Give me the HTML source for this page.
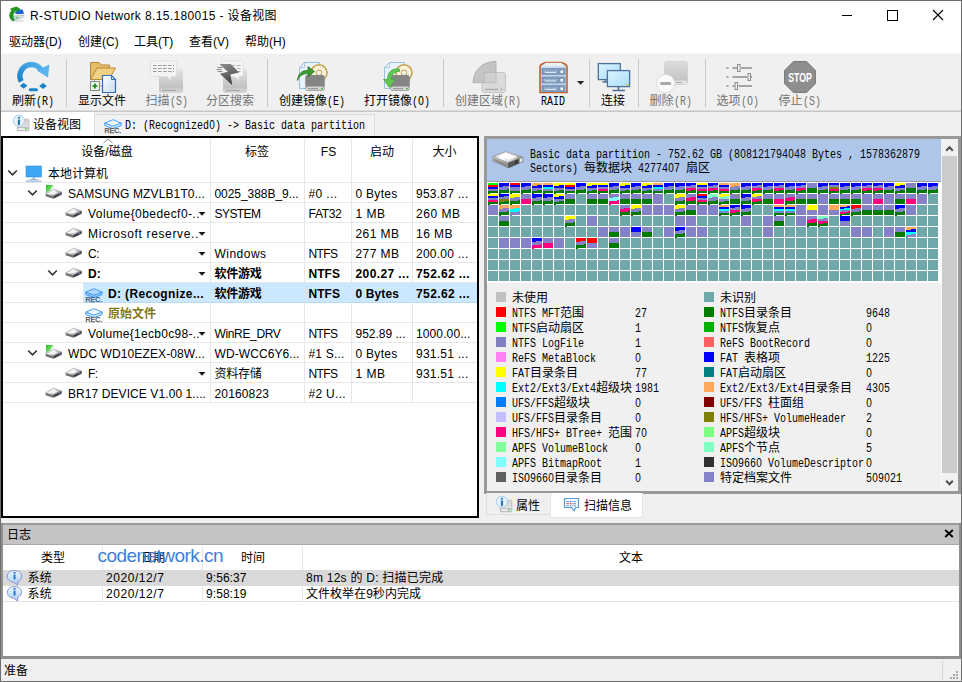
<!DOCTYPE html>
<html lang="zh-CN"><head><meta charset="utf-8"><title>R-STUDIO Network</title>
<style>
*{box-sizing:border-box;margin:0;padding:0}
html,body{width:962px;height:682px;overflow:hidden;background:#f0f0f0}
body{position:relative;font-family:"Liberation Sans","Noto Sans CJK SC",sans-serif;font-size:12px;color:#000}
.a{position:absolute}
.ss{font-family:"Liberation Mono","Noto Sans CJK SC",monospace;font-size:12px;white-space:nowrap}
.ss .l,.ss .c{display:inline-block;vertical-align:top;line-height:inherit;white-space:pre;position:relative}
.ss .l{font-family:"Liberation Mono",monospace;top:2px;transform:scaleX(0.83333);transform-origin:0 50%}
.ss .c{font-family:"Liberation Sans","Noto Sans CJK SC",sans-serif;top:1px}
.ss .z{font-family:"Liberation Sans",sans-serif;display:inline-block;width:7.2px;text-align:center;line-height:0}
.t{position:absolute;white-space:nowrap;line-height:16px;height:16px}
</style></head>
<body>
<div class="a" style="left:0px;top:0px;width:962px;height:682px;background:#fff;border:1px solid #6e6e6e"></div>
<div class="t " style="left:30px;top:8px;letter-spacing:0.369px;">R-STUDIO Network 8.15.180015 - 设备视图</div>
<svg class="a" style="left:8px;top:6px" width="18" height="17" viewBox="0 0 18 17">
<defs><linearGradient id="ai1" x1="0" y1="0" x2="0" y2="1"><stop offset="0" stop-color="#f4f6fa"/><stop offset="1" stop-color="#b9c3d3"/></linearGradient></defs>
<ellipse cx="9.500" cy="15" rx="7" ry="1.300" fill="#d8d8d8" opacity="0.700"/>
<path d="M6.400 7 L10.300 3.500 H14.500 L16.200 7.800 L9.700 8.600 Z" fill="#1d62d0"/>
<path d="M4.900 8.600 L16.600 7.800 V11 L14.300 12.800 L6.400 14.400 L4.900 12.600 Z" fill="url(#ai1)"/>
<path d="M5.500 10.300 L16.300 9.300" stroke="#8a95aa" stroke-width="0.500"/>
<rect x="8.400" y="11.100" width="1.800" height="1.100" fill="#22b822"/>
<path d="M5.600 14.900 C1.500 14 -0.200 8.500 3.500 4.700 L2.600 2.800 L8.200 0.800 L12 2.800 L9.400 5.600 L8 4.800 C5 7 4.300 10.500 6.300 13.600 Z" fill="#1f9a1f" stroke="#147814" stroke-width="0.400"/>
</svg>
<svg class="a" style="left:836px;top:4px" width="120" height="22" viewBox="0 0 120 22"><g fill="none" stroke="#000" stroke-width="1">
<path d="M6 11.500 H16"/><rect x="51.500" y="6.500" width="10" height="10"/><path d="M97 6 L107 16 M107 6 L97 16" stroke-width="1.100"/></g></svg>
<div class="t " style="left:9px;top:34px;">驱动器(D)</div>
<div class="t " style="left:78px;top:34px;">创建(C)</div>
<div class="t " style="left:134px;top:34px;">工具(T)</div>
<div class="t " style="left:189px;top:34px;">查看(V)</div>
<div class="t " style="left:245px;top:34px;">帮助(H)</div>
<div class="a" style="left:1px;top:53px;width:960px;height:628px;background:#f0f0f0;"></div>
<div class="a" style="left:1px;top:53px;width:960px;height:1px;background:#fafafa;"></div>
<div class="a" style="left:1px;top:110px;width:960px;height:1px;background:#dcdcdc;"></div>
<div class="a" style="left:66px;top:59px;width:1px;height:48px;background:#c9c9c9;"></div>
<div class="a" style="left:267px;top:59px;width:1px;height:48px;background:#c9c9c9;"></div>
<div class="a" style="left:443px;top:59px;width:1px;height:48px;background:#c9c9c9;"></div>
<div class="a" style="left:589px;top:59px;width:1px;height:48px;background:#c9c9c9;"></div>
<div class="a" style="left:638px;top:59px;width:1px;height:48px;background:#c9c9c9;"></div>
<div class="a" style="left:705px;top:59px;width:1px;height:48px;background:#c9c9c9;"></div>
<div class="t ss" style="left:33px;top:92px;width:120px;margin-left:-60px;text-align:center;color:#000"><span class="c">刷新</span><span class="l" style="margin-right:-3.600px">(R)</span></div>
<div class="t ss" style="left:102px;top:92px;width:120px;margin-left:-60px;text-align:center;color:#000"><span class="c">显示文件</span></div>
<div class="t ss" style="left:166.5px;top:92px;width:120px;margin-left:-60px;text-align:center;color:#737373"><span class="c">扫描</span><span class="l" style="margin-right:-3.600px">(S)</span></div>
<div class="t ss" style="left:230px;top:92px;width:120px;margin-left:-60px;text-align:center;color:#737373"><span class="c">分区搜索</span></div>
<div class="t ss" style="left:312px;top:92px;width:120px;margin-left:-60px;text-align:center;color:#000"><span class="c">创建镜像</span><span class="l" style="margin-right:-3.600px">(E)</span></div>
<div class="t ss" style="left:397px;top:92px;width:120px;margin-left:-60px;text-align:center;color:#000"><span class="c">打开镜像</span><span class="l" style="margin-right:-3.600px">(O)</span></div>
<div class="t ss" style="left:488px;top:92px;width:120px;margin-left:-60px;text-align:center;color:#737373"><span class="c">创建区域</span><span class="l" style="margin-right:-3.600px">(R)</span></div>
<div class="t ss" style="left:553px;top:92px;width:120px;margin-left:-60px;text-align:center;color:#000"><span class="l" style="margin-right:-4.800px">RAID</span></div>
<div class="t ss" style="left:613px;top:92px;width:120px;margin-left:-60px;text-align:center;color:#000"><span class="c">连接</span></div>
<div class="t ss" style="left:670.5px;top:92px;width:120px;margin-left:-60px;text-align:center;color:#737373"><span class="c">删除</span><span class="l" style="margin-right:-3.600px">(R)</span></div>
<div class="t ss" style="left:737.5px;top:92px;width:120px;margin-left:-60px;text-align:center;color:#737373"><span class="c">选项</span><span class="l" style="margin-right:-3.600px">(O)</span></div>
<div class="t ss" style="left:799.5px;top:92px;width:120px;margin-left:-60px;text-align:center;color:#737373"><span class="c">停止</span><span class="l" style="margin-right:-3.600px">(S)</span></div>
<svg class="a" style="left:14px;top:58px" width="38" height="36" viewBox="0 0 38 36">
<defs><linearGradient id="rf" x1="0" y1="1" x2="1" y2="0"><stop offset="0" stop-color="#1a84cb"/><stop offset="1" stop-color="#55b0ec"/></linearGradient></defs>
<path d="M7.200 23.400 A11.400 11.400 0 1 1 27.500 12.600" fill="none" stroke="url(#rf)" stroke-width="5.300"/>
<path d="M22.800 12.400 L35.400 6.600 L34 19.400 Z" fill="#58b3ee"/>
<path d="M5.800 27.800 L9.600 24.800 L13.400 27.800 L9.600 30.800 Z M25.200 28 L29 25 L32.800 28 L29 31 Z" fill="#1a84cb"/>
<rect x="14.800" y="30.200" width="9.200" height="3" rx="1.500" fill="#1a84cb"/>
</svg>
<svg class="a" style="left:88px;top:60px" width="30" height="34" viewBox="0 0 30 34">
<defs><linearGradient id="doc" x1="0" y1="0" x2="1" y2="1"><stop offset="0" stop-color="#ffffff"/><stop offset="1" stop-color="#c3dcf3"/></linearGradient></defs>
<path d="M2.5 19.5 V2.5 H11 L13.5 5 H21.5 V8" fill="#e6bd6a" stroke="#b98a36" stroke-width="1"/>
<path d="M2.5 19.5 L9 8 H27.5 L21 19.5 Z" fill="#f0cf86" stroke="#b98a36" stroke-width="1"/>
<path d="M14.5 15.5 H23.5 L27.5 19.5 V32.5 H14.5 Z" fill="url(#doc)" stroke="#2f6fb3" stroke-width="1.2"/>
<path d="M23.5 15.5 V19.5 H27.5" fill="none" stroke="#2f6fb3" stroke-width="1"/>
<path d="M6.5 19 V21.5 M11.5 26 H14" stroke="#9a9a9a" stroke-width="1"/>
<rect x="2.5" y="21.5" width="9" height="9" fill="#e8f5e4" stroke="#8a8a8a" stroke-width="1"/>
<path d="M4.5 26 H9.5 M7 23.5 V28.5" stroke="#0b8a0b" stroke-width="1.6"/>
</svg>
<svg class="a" style="left:148px;top:58px" width="38" height="36" viewBox="0 0 38 36"><defs><linearGradient id="g3" x1="0" y1="0" x2="0" y2="1"><stop offset="0" stop-color="#e2e2e2"/><stop offset="1" stop-color="#b9b9b9"/></linearGradient></defs>
<rect x="11" y="11" width="24" height="23.5" rx="2.5" fill="url(#g3)"/>
<rect x="11" y="30.5" width="24" height="3.6" rx="1.6" fill="#cfcfcf"/>
<rect x="14" y="31.9" width="14" height="1" fill="#a3a3a3"/>
<path d="M4.5 3 H26.5 Q28.5 3 28.5 5 V16.5 Q28.5 18.5 26.5 18.5 H23 V22.5 L18.5 18.5 H4.5 Q2.5 18.5 2.5 16.5 V5 Q2.5 3 4.5 3 Z" fill="#f4f4f4" stroke="#dcdcdc" stroke-width="0.8"/>
<path d="M5 7.5 H26 M5 10.5 H26 M5 13.5 H26" stroke="#9c9c9c" stroke-width="1.1" stroke-dasharray="3.6 1.4"/>
</svg>
<svg class="a" style="left:212px;top:58px" width="38" height="36" viewBox="0 0 38 36"><defs><linearGradient id="g4" x1="0" y1="0" x2="0" y2="1"><stop offset="0" stop-color="#e2e2e2"/><stop offset="1" stop-color="#b9b9b9"/></linearGradient></defs>
<rect x="11" y="11" width="24" height="23.5" rx="2.5" fill="url(#g4)"/>
<rect x="11" y="30.5" width="24" height="3.6" rx="1.6" fill="#cfcfcf"/>
<rect x="14" y="31.9" width="14" height="1" fill="#a3a3a3"/>
<path d="M9.5 3 H29.5 Q31.5 3 31.5 5 V16.5 Q31.5 18.5 29.5 18.5 H27 V22.5 L22.5 18.5 H9.5 Z" fill="#f4f4f4" stroke="#dcdcdc" stroke-width="0.8"/>
<path d="M20 7.5 H29 M20 10.5 H29 M20 13.5 H29" stroke="#b4b4b4" stroke-width="1.1" stroke-dasharray="3.6 1.4"/>
<path d="M5.5 9.5 H10.5 M4.5 11.5 H9.5 M5.5 13.5 H10.5" stroke="#8c8c8c" stroke-width="1"/>
<defs><linearGradient id="blt" x1="0" y1="0" x2="0.3" y2="1"><stop offset="0" stop-color="#8e8e8e"/><stop offset="0.5" stop-color="#6a6a6a"/><stop offset="1" stop-color="#3e3e3e"/></linearGradient></defs><path d="M7.5 5.9 L18.7 5.9 L26.9 14.6 L18.4 16.4 L20.3 27.3 L8 15.700 L15.8 13.8 Z" fill="url(#blt)"/>
</svg>
<svg class="a" style="left:294px;top:58px" width="38" height="36" viewBox="0 0 38 36"><path d="M5.5 9.5 L10.5 4.5 H25.5 V30.5 H5.5 Z" fill="#eaf3fc" stroke="#9dbfe3" stroke-width="1"/>
<path d="M5.5 9.5 H10.5 V4.5" fill="none" stroke="#9dbfe3" stroke-width="0.8"/>
<circle cx="25" cy="14.8" r="8" fill="#fbf3dc" stroke="#c4a050" stroke-width="1.6"/>
<circle cx="25" cy="14.8" r="2.8" fill="#f0f0f0" stroke="#c4a050" stroke-width="1"/>
<rect x="11.5" y="17" width="19" height="16" rx="2.5" fill="#7a7a7a"/>
<rect x="11.5" y="17" width="19" height="11.5" rx="2.5" fill="#858585"/>
<rect x="12" y="28.5" width="18" height="4" rx="1.5" fill="#d4d4d4"/>
<rect x="14" y="30.2" width="10" height="1" fill="#8e8e8e"/><rect x="27" y="30" width="2" height="1.4" fill="#3fbf3f"/>
<path d="M3.5 22.500 C4 15 9 12 14 12.5 V8.5 L20.500 13.5 L14 18.500 V15.500 C9 15.500 5.5 17.500 3.5 22.500 Z" fill="#3f9b2f" stroke="#2c7a1f" stroke-width="0.8"/></svg>
<svg class="a" style="left:379px;top:58px" width="38" height="36" viewBox="0 0 38 36"><path d="M5.5 9.5 L10.5 4.5 H25.5 V30.5 H5.5 Z" fill="#eaf3fc" stroke="#9dbfe3" stroke-width="1"/>
<path d="M5.5 9.5 H10.5 V4.5" fill="none" stroke="#9dbfe3" stroke-width="0.8"/>
<circle cx="25" cy="14.8" r="8" fill="#fbf3dc" stroke="#c4a050" stroke-width="1.6"/>
<circle cx="25" cy="14.8" r="2.8" fill="#f0f0f0" stroke="#c4a050" stroke-width="1"/>
<rect x="11.5" y="17" width="19" height="16" rx="2.5" fill="#7a7a7a"/>
<rect x="11.5" y="17" width="19" height="11.5" rx="2.5" fill="#858585"/>
<rect x="12" y="28.5" width="18" height="4" rx="1.5" fill="#d4d4d4"/>
<rect x="14" y="30.2" width="10" height="1" fill="#8e8e8e"/><rect x="27" y="30" width="2" height="1.4" fill="#3fbf3f"/>
<path d="M20.500 11 C13 10 8.500 14 8.500 21.500 H4.500 L10.500 29.500 L16.500 21.500 H12.500 C12.500 16.500 15 13.500 20.500 13.500 Z" fill="#62c552" stroke="#45a838" stroke-width="0.8"/></svg>
<svg class="a" style="left:470px;top:58px" width="38" height="36" viewBox="0 0 38 36">
<rect x="12" y="14.500" width="23.500" height="20" rx="2.5" fill="#dadada" stroke="#c4c4c4" stroke-width="1"/>
<rect x="15" y="30.8" width="13" height="1.2" fill="#a9a9a9"/><rect x="30.500" y="30.600" width="2" height="1.600" fill="#b5b5b5"/>
<path d="M3 24.700 C3.500 11.500 12.500 3.800 26 3.300 V14.500 C18.500 15 14.800 18.500 14.500 24.700 Z" fill="#c4c4c4" stroke="#b2b2b2" stroke-width="1"/>
<path d="M14.500 14.500 H26 V24.700 H14.500 Z" fill="#cfcfcf" stroke="#b6b6b6" stroke-width="0.8"/>
</svg>
<svg class="a" style="left:537px;top:58px" width="34" height="36" viewBox="0 0 34 36">
<path d="M3 34.500 V9 Q3 7 5 6 L8.500 4.500 H24.500 L28 6 Q30 7 30 9 V34.500 Z" fill="#c9d6e6" stroke="#c2622b" stroke-width="1.600"/>
<path d="M8.500 4.800 H24.500 L27.500 8.500 H5.500 Z" fill="#e7eef6"/>
<rect x="4.500" y="10" width="24" height="7" fill="#7d9bbd"/><rect x="4.500" y="18.500" width="24" height="7" fill="#7d9bbd"/><rect x="4.500" y="27" width="24" height="7" fill="#7d9bbd"/>
<path d="M8 14.500 H19 M8 23 H19 M8 31.500 H19" stroke="#dfe8f2" stroke-width="1.200"/>
<path d="M8 12.500 V14.500 M10.700 12.500 V14.500 M13.400 12.500 V14.500 M16.100 12.500 V14.500 M19 12.500 V14.500 M8 21 V23 M10.700 21 V23 M13.400 21 V23 M16.100 21 V23 M19 21 V23 M8 29.500 V31.500 M10.700 29.500 V31.500 M13.400 29.500 V31.500 M16.100 29.500 V31.500 M19 29.500 V31.500" stroke="#dfe8f2" stroke-width="0.800"/>
<rect x="23.500" y="12.500" width="2.500" height="2.500" fill="#fff"/><rect x="23.500" y="21" width="2.500" height="2.500" fill="#fff"/><rect x="23.500" y="29.500" width="2.500" height="2.500" fill="#fff"/>
</svg>
<svg class="a" style="left:576px;top:80px" width="10" height="6" viewBox="0 0 10 6"><path d="M1 1 H8.200 L4.600 4.800 Z" fill="#222"/></svg>
<svg class="a" style="left:596px;top:60px" width="36" height="34" viewBox="0 0 36 34">
<defs><linearGradient id="mon" x1="0" y1="0" x2="1" y2="1"><stop offset="0" stop-color="#dcf5ff"/><stop offset="1" stop-color="#a9dcf9"/></linearGradient></defs>
<rect x="2.300" y="3.600" width="22" height="16" fill="url(#mon)" stroke="#4d7197" stroke-width="1.300"/>
<path d="M6.500 22 H11 M9.500 19.600 V22" stroke="#4d7197" stroke-width="1.500"/>
<rect x="11.400" y="10.600" width="22.200" height="16" fill="url(#mon)" stroke="#4d7197" stroke-width="1.300"/>
<rect x="30" y="24.200" width="2.600" height="1.200" fill="#e6c020"/>
<path d="M22.500 26.800 V30 M16.500 30.500 H29" stroke="#4d7197" stroke-width="1.700"/>
</svg>
<svg class="a" style="left:654px;top:58px" width="38" height="36" viewBox="0 0 38 36">
<defs><linearGradient id="g10" x1="0" y1="0" x2="0" y2="1"><stop offset="0" stop-color="#dedede"/><stop offset="1" stop-color="#bdbdbd"/></linearGradient></defs>
<rect x="10.500" y="3.500" width="23" height="23" rx="2.500" fill="url(#g10)" stroke="#d0d0d0" stroke-width="0.800"/>
<rect x="11" y="22.500" width="22" height="3.600" rx="1.500" fill="#e4e4e4"/><rect x="22" y="24" width="6" height="1" fill="#aaa"/>
<circle cx="11.600" cy="25.600" r="9.100" fill="#fbfbfb" stroke="#dcdcdc" stroke-width="1"/>
<rect x="6" y="24.100" width="11.200" height="3" rx="1.500" fill="#a8a8a8"/>
</svg>
<svg class="a" style="left:724px;top:60px" width="30" height="32" viewBox="0 0 30 32">
<g stroke="#8b8b8b" stroke-width="1.400">
<path d="M2.500 8 H4.500 M8.500 8 H13 M17 8 H28"/><path d="M2.500 17 H4.500 M8.500 17 H23 M27 17 H28"/><path d="M2.500 26 H4.500 M8.500 26 H10.500 M14.500 26 H28"/></g>
<g fill="#f4f4f4" stroke="#8b8b8b" stroke-width="1"><rect x="13.500" y="4.500" width="2.500" height="7"/><rect x="24" y="13.500" width="2.500" height="7"/><rect x="11" y="22.500" width="2.500" height="7"/></g>
</svg>
<svg class="a" style="left:783px;top:60px" width="34" height="34" viewBox="0 0 34 34">
<path d="M10.400 1.500 H23.600 L32.500 10.400 V23.600 L23.600 32.500 H10.400 L1.500 23.600 V10.400 Z" fill="#8e8e8e" stroke="#7c7c7c" stroke-width="1"/>
<text x="17" y="21.600" text-anchor="middle" font-family="Liberation Sans, sans-serif" font-size="12.500" font-weight="bold" fill="#fff" textLength="23.500" lengthAdjust="spacingAndGlyphs">STOP</text>
</svg>
<div class="a" style="left:1px;top:111px;width:960px;height:1px;background:#c6c6c6;"></div>
<div class="a" style="left:1px;top:112px;width:93px;height:25px;background:#fff;"></div>
<div class="a" style="left:94px;top:114px;width:281px;height:23px;background:#f2f2f2;border:1px solid #dcdcdc;border-bottom:none"></div>
<svg class="a" style="left:12px;top:114px" width="20" height="20" viewBox="0 0 20 20">
<defs><linearGradient id="dv12" x1="0" y1="0" x2="0" y2="1"><stop offset="0" stop-color="#d2d2d2"/><stop offset="1" stop-color="#e6e6e6"/></linearGradient></defs>
<rect x="5.300" y="5.200" width="11.600" height="11.600" rx="1" fill="url(#dv12)" stroke="#b4b4b4" stroke-width="0.700"/>
<rect x="5.600" y="13.700" width="11" height="2.900" fill="#ececec" stroke="#a9a9a9" stroke-width="0.600"/><rect x="12.900" y="14.300" width="2.300" height="1" fill="#35c835"/>
<circle cx="6.900" cy="6.800" r="5.600" fill="#e6f2fc" stroke="#a5c8ea" stroke-width="0.900"/>
<rect x="5.850" y="5.500" width="2.200" height="5.400" fill="#2878a8"/><rect x="5.850" y="2.900" width="2.200" height="1.600" fill="#2878a8"/>
</svg>
<div class="t ss" style="left:33px;top:116px;"><span class="c">设备视图</span></div>
<svg class="a" style="left:104px;top:117px" width="20" height="18" viewBox="0 0 20 18">
<path d="M0.800 6.100 V8.600 L8.900 11.600 L17.100 8.600 V6.100 Z" fill="#d6eafc" stroke="#3f9df2" stroke-width="1" stroke-linejoin="round"/>
<path d="M0.800 6.100 L8.900 2.700 L17.100 6.100 L8.900 9.200 Z" fill="#f2f9ff" stroke="#3f9df2" stroke-width="1" stroke-linejoin="round"/>
<text x="0.600" y="15.800" font-family="Liberation Sans, sans-serif" font-size="7.400" fill="#444" stroke="#444" stroke-width="0.250" textLength="16.500" lengthAdjust="spacingAndGlyphs">REC.</text>
</svg>
<div class="t ss" style="left:125px;top:116px;"><span class="l" style="margin-right:-48.000px">D: (Recognized<span class="z">0</span>) -&gt; Basic data partition</span></div>
<div class="a" style="left:1px;top:136px;width:478px;height:382px;background:#fff;border:2px solid #000"></div>
<div class="a" style="left:210px;top:138px;width:1px;height:264px;background:#e6e6e6;"></div>
<div class="a" style="left:304px;top:138px;width:1px;height:264px;background:#e6e6e6;"></div>
<div class="a" style="left:351px;top:138px;width:1px;height:264px;background:#e6e6e6;"></div>
<div class="a" style="left:412px;top:138px;width:1px;height:264px;background:#e6e6e6;"></div>
<div class="a" style="left:3px;top:182px;width:474px;height:1px;background:#e6e6e6;"></div>
<div class="a" style="left:3px;top:202px;width:474px;height:1px;background:#e6e6e6;"></div>
<div class="a" style="left:3px;top:222px;width:474px;height:1px;background:#e6e6e6;"></div>
<div class="a" style="left:3px;top:242px;width:474px;height:1px;background:#e6e6e6;"></div>
<div class="a" style="left:3px;top:262px;width:474px;height:1px;background:#e6e6e6;"></div>
<div class="a" style="left:3px;top:282px;width:474px;height:1px;background:#e6e6e6;"></div>
<div class="a" style="left:3px;top:302px;width:474px;height:1px;background:#e6e6e6;"></div>
<div class="a" style="left:3px;top:322px;width:474px;height:1px;background:#e6e6e6;"></div>
<div class="a" style="left:3px;top:342px;width:474px;height:1px;background:#e6e6e6;"></div>
<div class="a" style="left:3px;top:362px;width:474px;height:1px;background:#e6e6e6;"></div>
<div class="a" style="left:3px;top:382px;width:474px;height:1px;background:#e6e6e6;"></div>
<div class="a" style="left:3px;top:402px;width:474px;height:1px;background:#e6e6e6;"></div>
<svg class="a" style="left:102px;top:138px" width="12" height="6" viewBox="0 0 12 6"><path d="M1.500 5 L6 1 L10.500 5" fill="none" stroke="#8a8a8a" stroke-width="1"/></svg>
<div class="t" style="left:107px;top:144px;width:100px;margin-left:-50px;text-align:center">设备/磁盘</div>
<div class="t" style="left:257px;top:144px;width:100px;margin-left:-50px;text-align:center">标签</div>
<div class="t" style="left:328.5px;top:144px;width:100px;margin-left:-50px;text-align:center">FS</div>
<div class="t" style="left:382px;top:144px;width:100px;margin-left:-50px;text-align:center">启动</div>
<div class="t" style="left:444.5px;top:144px;width:100px;margin-left:-50px;text-align:center">大小</div>
<svg class="a" style="left:7px;top:169.3px" width="11" height="8" viewBox="0 0 11 8"><path d="M1.200 1.500 L5.500 5.800 L9.800 1.500" fill="none" stroke="#333" stroke-width="1.650"/></svg>
<svg class="a" style="left:25px;top:165px" width="18" height="17" viewBox="0 0 18 17"><rect x="1" y="1" width="15.500" height="11" fill="#3ea6f7" stroke="#2f8fe0" stroke-width="0.600"/>
<rect x="7.500" y="12" width="2.500" height="2.500" fill="#9fb8d6"/><rect x="4.500" y="14" width="8.500" height="1" fill="#9fb8d6"/><rect x="1" y="15.600" width="15.500" height="1" fill="#7f9fd0"/></svg>
<div class="t " style="left:48px;top:166px;letter-spacing:0.000px;">本地计算机</div>
<svg class="a" style="left:27px;top:189.3px" width="11" height="8" viewBox="0 0 11 8"><path d="M1.200 1.500 L5.500 5.800 L9.800 1.500" fill="none" stroke="#333" stroke-width="1.650"/></svg>
<svg class="a" style="left:44.8px;top:184.6px" width="18" height="14" viewBox="0 0 18 14"><defs><linearGradient id="gg1" x1="0" y1="0" x2="1" y2="1"><stop offset="0" stop-color="#16c416"/><stop offset="0.6" stop-color="#7fe07f"/><stop offset="1" stop-color="#d8f4d8"/></linearGradient></defs><path d="M1 0 H8.500 L5.500 5 L1 8.500 Z" fill="url(#gg1)"/>
<defs><linearGradient id="dt1" x1="0" y1="0" x2="1" y2="0.600"><stop offset="0" stop-color="#a2a2a2"/><stop offset="0.450" stop-color="#f4f4f4"/><stop offset="1" stop-color="#7c7c7c"/></linearGradient></defs>
<g transform="translate(0.300,4)">
<path d="M0.300 4.900 L8.300 0.200 L16.400 3.100 L8 7.300 Z" fill="url(#dt1)" stroke="#8a8a8a" stroke-width="0.500"/>
<path d="M0.300 4.900 L8 7.300 V9.700 L0.300 7.300 Z" fill="#6f6f6f"/>
<path d="M8 7.300 L16.400 3.100 V5.700 L8 9.700 Z" fill="#3e3e3e"/>
<path d="M4.500 4.300 L8.500 2 L12.500 3.500 L8.300 5.600 Z" fill="#f7f7f7" opacity="0.900"/>
<rect x="13.600" y="4.600" width="1.400" height="1.300" fill="#5a8fe0"/>
</g></svg>
<div class="t " style="left:68px;top:186px;letter-spacing:0.121px;">SAMSUNG MZVLB1T0...</div>
<div class="t " style="left:214.5px;top:186px;letter-spacing:-0.053px;">0025_388B_9...</div>
<div class="t " style="left:308.5px;top:186px;letter-spacing:0.386px;">#0 ...</div>
<div class="t " style="left:355.5px;top:186px;letter-spacing:0.283px;">0 Bytes</div>
<div class="t " style="left:416px;top:186px;letter-spacing:0.246px;">953.87 ...</div>
<svg class="a" style="left:64.8px;top:203.8px" width="18" height="14" viewBox="0 0 18 14">
<defs><linearGradient id="dt2" x1="0" y1="0" x2="1" y2="0.600"><stop offset="0" stop-color="#a2a2a2"/><stop offset="0.450" stop-color="#f4f4f4"/><stop offset="1" stop-color="#7c7c7c"/></linearGradient></defs>
<g transform="translate(0.300,4)">
<path d="M0.300 4.900 L8.300 0.200 L16.400 3.100 L8 7.300 Z" fill="url(#dt2)" stroke="#8a8a8a" stroke-width="0.500"/>
<path d="M0.300 4.900 L8 7.300 V9.700 L0.300 7.300 Z" fill="#6f6f6f"/>
<path d="M8 7.300 L16.400 3.100 V5.700 L8 9.700 Z" fill="#3e3e3e"/>
<path d="M4.500 4.300 L8.500 2 L12.500 3.500 L8.300 5.600 Z" fill="#f7f7f7" opacity="0.900"/>
<rect x="13.600" y="4.600" width="1.400" height="1.300" fill="#5a8fe0"/>
</g></svg>
<div class="t " style="left:88px;top:206px;letter-spacing:0.440px;">Volume{0bedecf0-..</div>
<svg class="a" style="left:198px;top:211px" width="9" height="6" viewBox="0 0 9 6"><path d="M0.500 1 H7.500 L4 4.800 Z" fill="#1a1a1a"/></svg>
<div class="t " style="left:214.5px;top:206px;letter-spacing:-0.558px;">SYSTEM</div>
<div class="t " style="left:308.5px;top:206px;letter-spacing:-0.292px;">FAT32</div>
<div class="t " style="left:355.5px;top:206px;letter-spacing:0.498px;">1 MB</div>
<div class="t " style="left:416px;top:206px;letter-spacing:0.524px;">260 MB</div>
<svg class="a" style="left:64.8px;top:223.8px" width="18" height="14" viewBox="0 0 18 14">
<defs><linearGradient id="dt3" x1="0" y1="0" x2="1" y2="0.600"><stop offset="0" stop-color="#a2a2a2"/><stop offset="0.450" stop-color="#f4f4f4"/><stop offset="1" stop-color="#7c7c7c"/></linearGradient></defs>
<g transform="translate(0.300,4)">
<path d="M0.300 4.900 L8.300 0.200 L16.400 3.100 L8 7.300 Z" fill="url(#dt3)" stroke="#8a8a8a" stroke-width="0.500"/>
<path d="M0.300 4.900 L8 7.300 V9.700 L0.300 7.300 Z" fill="#6f6f6f"/>
<path d="M8 7.300 L16.400 3.100 V5.700 L8 9.700 Z" fill="#3e3e3e"/>
<path d="M4.500 4.300 L8.500 2 L12.500 3.500 L8.300 5.600 Z" fill="#f7f7f7" opacity="0.900"/>
<rect x="13.600" y="4.600" width="1.400" height="1.300" fill="#5a8fe0"/>
</g></svg>
<div class="t " style="left:88px;top:226px;letter-spacing:0.648px;">Microsoft reserve..</div>
<svg class="a" style="left:198px;top:231px" width="9" height="6" viewBox="0 0 9 6"><path d="M0.500 1 H7.500 L4 4.800 Z" fill="#1a1a1a"/></svg>
<div class="t " style="left:355.5px;top:226px;letter-spacing:0.441px;">261 MB</div>
<div class="t " style="left:416px;top:226px;letter-spacing:0.463px;">16 MB</div>
<svg class="a" style="left:64.8px;top:243.8px" width="18" height="14" viewBox="0 0 18 14">
<defs><linearGradient id="dt4" x1="0" y1="0" x2="1" y2="0.600"><stop offset="0" stop-color="#a2a2a2"/><stop offset="0.450" stop-color="#f4f4f4"/><stop offset="1" stop-color="#7c7c7c"/></linearGradient></defs>
<g transform="translate(0.300,4)">
<path d="M0.300 4.900 L8.300 0.200 L16.400 3.100 L8 7.300 Z" fill="url(#dt4)" stroke="#8a8a8a" stroke-width="0.500"/>
<path d="M0.300 4.900 L8 7.300 V9.700 L0.300 7.300 Z" fill="#6f6f6f"/>
<path d="M8 7.300 L16.400 3.100 V5.700 L8 9.700 Z" fill="#3e3e3e"/>
<path d="M4.500 4.300 L8.500 2 L12.500 3.500 L8.300 5.600 Z" fill="#f7f7f7" opacity="0.900"/>
<rect x="13.600" y="4.600" width="1.400" height="1.300" fill="#5a8fe0"/>
</g></svg>
<div class="t " style="left:88px;top:246px;letter-spacing:-0.500px;">C:</div>
<svg class="a" style="left:198px;top:251px" width="9" height="6" viewBox="0 0 9 6"><path d="M0.500 1 H7.500 L4 4.800 Z" fill="#1a1a1a"/></svg>
<div class="t " style="left:214.5px;top:246px;letter-spacing:0.475px;">Windows</div>
<div class="t " style="left:308.5px;top:246px;letter-spacing:-0.582px;">NTFS</div>
<div class="t " style="left:355.5px;top:246px;letter-spacing:0.441px;">277 MB</div>
<div class="t " style="left:416px;top:246px;letter-spacing:0.246px;">200.00 ...</div>
<svg class="a" style="left:47px;top:269.3px" width="11" height="8" viewBox="0 0 11 8"><path d="M1.200 1.500 L5.500 5.800 L9.800 1.500" fill="none" stroke="#333" stroke-width="1.650"/></svg>
<svg class="a" style="left:64.8px;top:263.8px" width="18" height="14" viewBox="0 0 18 14">
<defs><linearGradient id="dt5" x1="0" y1="0" x2="1" y2="0.600"><stop offset="0" stop-color="#a2a2a2"/><stop offset="0.450" stop-color="#f4f4f4"/><stop offset="1" stop-color="#7c7c7c"/></linearGradient></defs>
<g transform="translate(0.300,4)">
<path d="M0.300 4.900 L8.300 0.200 L16.400 3.100 L8 7.300 Z" fill="url(#dt5)" stroke="#8a8a8a" stroke-width="0.500"/>
<path d="M0.300 4.900 L8 7.300 V9.700 L0.300 7.300 Z" fill="#6f6f6f"/>
<path d="M8 7.300 L16.400 3.100 V5.700 L8 9.700 Z" fill="#3e3e3e"/>
<path d="M4.500 4.300 L8.500 2 L12.500 3.500 L8.300 5.600 Z" fill="#f7f7f7" opacity="0.900"/>
<rect x="13.600" y="4.600" width="1.400" height="1.300" fill="#5a8fe0"/>
</g></svg>
<div class="t " style="left:88px;top:266px;letter-spacing:0.169px;font-weight:bold;">D:</div>
<svg class="a" style="left:198px;top:271px" width="9" height="6" viewBox="0 0 9 6"><path d="M0.500 1 H7.500 L4 4.800 Z" fill="#1a1a1a"/></svg>
<div class="t " style="left:214.5px;top:266px;letter-spacing:-0.250px;font-weight:bold;">软件游戏</div>
<div class="t " style="left:308.5px;top:266px;letter-spacing:0.043px;font-weight:bold;">NTFS</div>
<div class="t " style="left:355.5px;top:266px;letter-spacing:0.396px;font-weight:bold;">200.27 ...</div>
<div class="t " style="left:416px;top:266px;letter-spacing:0.396px;font-weight:bold;">752.62 ...</div>
<div class="a" style="left:83px;top:283px;width:394px;height:19px;background:#cce8ff;"></div>
<div class="a" style="left:83px;top:302px;width:394px;height:1px;background:#b8daf6;"></div>
<svg class="a" style="left:85px;top:285.8px" width="20" height="18" viewBox="0 0 20 18">
<path d="M0.800 6.100 V8.600 L8.900 11.600 L17.100 8.600 V6.100 Z" fill="#8cc2f7" stroke="#3f9df2" stroke-width="1" stroke-linejoin="round"/>
<path d="M0.800 6.100 L8.900 2.700 L17.100 6.100 L8.900 9.200 Z" fill="#b4d8fb" stroke="#3f9df2" stroke-width="1" stroke-linejoin="round"/>
<text x="0.600" y="15.800" font-family="Liberation Sans, sans-serif" font-size="7.400" fill="#2d4f70" stroke="#2d4f70" stroke-width="0.250" textLength="16.500" lengthAdjust="spacingAndGlyphs">REC.</text>
</svg>
<div class="t " style="left:108px;top:286px;letter-spacing:0.375px;font-weight:bold;">D: (Recognize...</div>
<div class="t " style="left:214.5px;top:286px;letter-spacing:-0.250px;font-weight:bold;">软件游戏</div>
<div class="t " style="left:308.5px;top:286px;letter-spacing:0.043px;font-weight:bold;">NTFS</div>
<div class="t " style="left:355.5px;top:286px;letter-spacing:0.116px;font-weight:bold;">0 Bytes</div>
<div class="t " style="left:416px;top:286px;letter-spacing:0.396px;font-weight:bold;">752.62 ...</div>
<svg class="a" style="left:85px;top:305.8px" width="20" height="18" viewBox="0 0 20 18">
<path d="M0.800 6.100 V8.600 L8.900 11.600 L17.100 8.600 V6.100 Z" fill="#d6eafc" stroke="#3f9df2" stroke-width="1" stroke-linejoin="round"/>
<path d="M0.800 6.100 L8.900 2.700 L17.100 6.100 L8.900 9.200 Z" fill="#f2f9ff" stroke="#3f9df2" stroke-width="1" stroke-linejoin="round"/>
<text x="0.600" y="15.800" font-family="Liberation Sans, sans-serif" font-size="7.400" fill="#444" stroke="#444" stroke-width="0.250" textLength="16.500" lengthAdjust="spacingAndGlyphs">REC.</text>
</svg>
<div class="t " style="left:108px;top:306px;color:#857a12;letter-spacing:0.000px;font-weight:bold;">原始文件</div>
<svg class="a" style="left:64.8px;top:323.8px" width="18" height="14" viewBox="0 0 18 14">
<defs><linearGradient id="dt6" x1="0" y1="0" x2="1" y2="0.600"><stop offset="0" stop-color="#a2a2a2"/><stop offset="0.450" stop-color="#f4f4f4"/><stop offset="1" stop-color="#7c7c7c"/></linearGradient></defs>
<g transform="translate(0.300,4)">
<path d="M0.300 4.900 L8.300 0.200 L16.400 3.100 L8 7.300 Z" fill="url(#dt6)" stroke="#8a8a8a" stroke-width="0.500"/>
<path d="M0.300 4.900 L8 7.300 V9.700 L0.300 7.300 Z" fill="#6f6f6f"/>
<path d="M8 7.300 L16.400 3.100 V5.700 L8 9.700 Z" fill="#3e3e3e"/>
<path d="M4.500 4.300 L8.500 2 L12.500 3.500 L8.300 5.600 Z" fill="#f7f7f7" opacity="0.900"/>
<rect x="13.600" y="4.600" width="1.400" height="1.300" fill="#5a8fe0"/>
</g></svg>
<div class="t " style="left:88px;top:326px;letter-spacing:0.292px;">Volume{1ecb0c98-..</div>
<svg class="a" style="left:198px;top:331px" width="9" height="6" viewBox="0 0 9 6"><path d="M0.500 1 H7.500 L4 4.800 Z" fill="#1a1a1a"/></svg>
<div class="t " style="left:214.5px;top:326px;letter-spacing:-0.348px;">WinRE_DRV</div>
<div class="t " style="left:308.5px;top:326px;letter-spacing:-0.582px;">NTFS</div>
<div class="t " style="left:355.5px;top:326px;letter-spacing:-0.004px;">952.89 ...</div>
<div class="t " style="left:416px;top:326px;letter-spacing:0.112px;">1000.00...</div>
<svg class="a" style="left:27px;top:349.3px" width="11" height="8" viewBox="0 0 11 8"><path d="M1.200 1.500 L5.500 5.800 L9.800 1.500" fill="none" stroke="#333" stroke-width="1.650"/></svg>
<svg class="a" style="left:44.8px;top:344.6px" width="18" height="14" viewBox="0 0 18 14"><defs><linearGradient id="gg7" x1="0" y1="0" x2="1" y2="1"><stop offset="0" stop-color="#16c416"/><stop offset="0.6" stop-color="#7fe07f"/><stop offset="1" stop-color="#d8f4d8"/></linearGradient></defs><path d="M1 0 H8.500 L5.500 5 L1 8.500 Z" fill="url(#gg7)"/>
<defs><linearGradient id="dt7" x1="0" y1="0" x2="1" y2="0.600"><stop offset="0" stop-color="#a2a2a2"/><stop offset="0.450" stop-color="#f4f4f4"/><stop offset="1" stop-color="#7c7c7c"/></linearGradient></defs>
<g transform="translate(0.300,4)">
<path d="M0.300 4.900 L8.300 0.200 L16.400 3.100 L8 7.300 Z" fill="url(#dt7)" stroke="#8a8a8a" stroke-width="0.500"/>
<path d="M0.300 4.900 L8 7.300 V9.700 L0.300 7.300 Z" fill="#6f6f6f"/>
<path d="M8 7.300 L16.400 3.100 V5.700 L8 9.700 Z" fill="#3e3e3e"/>
<path d="M4.500 4.300 L8.500 2 L12.500 3.500 L8.300 5.600 Z" fill="#f7f7f7" opacity="0.900"/>
<rect x="13.600" y="4.600" width="1.400" height="1.300" fill="#5a8fe0"/>
</g></svg>
<div class="t " style="left:68px;top:346px;letter-spacing:0.122px;">WDC WD10EZEX-08W...</div>
<div class="t " style="left:214.5px;top:346px;letter-spacing:0.083px;">WD-WCC6Y6...</div>
<div class="t " style="left:308.5px;top:346px;letter-spacing:0.187px;">#1 S...</div>
<div class="t " style="left:355.5px;top:346px;letter-spacing:0.283px;">0 Bytes</div>
<div class="t " style="left:416px;top:346px;letter-spacing:0.246px;">931.51 ...</div>
<svg class="a" style="left:64.8px;top:363.8px" width="18" height="14" viewBox="0 0 18 14">
<defs><linearGradient id="dt8" x1="0" y1="0" x2="1" y2="0.600"><stop offset="0" stop-color="#a2a2a2"/><stop offset="0.450" stop-color="#f4f4f4"/><stop offset="1" stop-color="#7c7c7c"/></linearGradient></defs>
<g transform="translate(0.300,4)">
<path d="M0.300 4.900 L8.300 0.200 L16.400 3.100 L8 7.300 Z" fill="url(#dt8)" stroke="#8a8a8a" stroke-width="0.500"/>
<path d="M0.300 4.900 L8 7.300 V9.700 L0.300 7.300 Z" fill="#6f6f6f"/>
<path d="M8 7.300 L16.400 3.100 V5.700 L8 9.700 Z" fill="#3e3e3e"/>
<path d="M4.500 4.300 L8.500 2 L12.500 3.500 L8.300 5.600 Z" fill="#f7f7f7" opacity="0.900"/>
<rect x="13.600" y="4.600" width="1.400" height="1.300" fill="#5a8fe0"/>
</g></svg>
<div class="t " style="left:88px;top:366px;letter-spacing:-0.582px;">F:</div>
<svg class="a" style="left:198px;top:371px" width="9" height="6" viewBox="0 0 9 6"><path d="M0.500 1 H7.500 L4 4.800 Z" fill="#1a1a1a"/></svg>
<div class="t " style="left:214.5px;top:366px;letter-spacing:-0.250px;">资料存储</div>
<div class="t " style="left:308.5px;top:366px;letter-spacing:-0.582px;">NTFS</div>
<div class="t " style="left:355.5px;top:366px;letter-spacing:0.498px;">1 MB</div>
<div class="t " style="left:416px;top:366px;letter-spacing:0.246px;">931.51 ...</div>
<svg class="a" style="left:44.8px;top:383.8px" width="18" height="14" viewBox="0 0 18 14">
<defs><linearGradient id="dt9" x1="0" y1="0" x2="1" y2="0.600"><stop offset="0" stop-color="#a2a2a2"/><stop offset="0.450" stop-color="#f4f4f4"/><stop offset="1" stop-color="#7c7c7c"/></linearGradient></defs>
<g transform="translate(0.300,4)">
<path d="M0.300 4.900 L8.300 0.200 L16.400 3.100 L8 7.300 Z" fill="url(#dt9)" stroke="#8a8a8a" stroke-width="0.500"/>
<path d="M0.300 4.900 L8 7.300 V9.700 L0.300 7.300 Z" fill="#6f6f6f"/>
<path d="M8 7.300 L16.400 3.100 V5.700 L8 9.700 Z" fill="#3e3e3e"/>
<path d="M4.500 4.300 L8.500 2 L12.500 3.500 L8.300 5.600 Z" fill="#f7f7f7" opacity="0.900"/>
<rect x="13.600" y="4.600" width="1.400" height="1.300" fill="#5a8fe0"/>
</g></svg>
<div class="t " style="left:68px;top:386px;letter-spacing:0.084px;">BR17 DEVICE V1.00 1....</div>
<div class="t " style="left:214.5px;top:386px;letter-spacing:0.139px;">20160823</div>
<div class="t " style="left:308.5px;top:386px;letter-spacing:0.307px;">#2 U...</div>
<div class="a" style="left:484px;top:136px;width:477px;height:358px;background:#f0f0f0;border:3px solid #999"></div>
<div class="a" style="left:487px;top:139px;width:454px;height:42px;background:#aec6ea;"></div>
<div class="a" style="left:487px;top:181px;width:454px;height:1px;background:#9c9c9c;"></div>
<div class="a" style="left:487px;top:182px;width:454px;height:101px;background:#fff;"></div>
<svg class="a" style="left:491px;top:148px" width="34" height="22" viewBox="0 0 34 22">
<defs><linearGradient id="hd1" x1="0" y1="0" x2="1" y2="0.300"><stop offset="0" stop-color="#a9a9a9"/><stop offset="0.450" stop-color="#ffffff"/><stop offset="0.800" stop-color="#cfcfcf"/><stop offset="1" stop-color="#8e8e8e"/></linearGradient>
<linearGradient id="hd2" x1="0" y1="0" x2="0" y2="1"><stop offset="0" stop-color="#c9c9c9"/><stop offset="1" stop-color="#8a8a8a"/></linearGradient></defs>
<path d="M1.300 8.400 L14.600 3.800 L32.100 9.200 V13.800 L17.500 20 L1.300 12.900 Z" fill="#5a5a5a"/>
<path d="M1.300 8.400 L17.100 14.600 V20 L1.300 12.900 Z" fill="url(#hd2)"/>
<path d="M17.100 14.600 L32.100 9.200 V13.800 L17.500 20 Z" fill="#555"/>
<path d="M28.500 10.600 L31.600 9.500 V13.600 L28.500 14.900 Z" fill="#e9e9e9"/>
<path d="M24 12.300 L26.800 11.300 V15.300 L24 16.500 Z" fill="#3a3a3a"/>
<path d="M1.300 8.400 L14.600 3.800 L32.100 9.200 L17.100 14.600 Z" fill="url(#hd1)" stroke="#8c8c8c" stroke-width="0.500"/>
<path d="M7 8 L15 5.200 L26.500 8.800 L18 11.800 Z" fill="#ffffff" opacity="0.850"/>
<path d="M2.500 11 L16 16.800 M2.500 12.400 L16 18.300" stroke="#6e6e6e" stroke-width="0.600"/>
</svg>
<div class="t ss" style="left:530px;top:146px;line-height:14px;height:14px"><span class="l" style="margin-right:-78.000px">Basic data partition - 752.62 GB (8<span class="z">0</span>8121794<span class="z">0</span>48 Bytes , 1578362879</span></div>
<div class="t ss" style="left:530px;top:160px;line-height:14px;height:14px"><span class="l" style="margin-right:-10.800px">Sectors) </span><span class="c">每数据块</span><span class="l" style="margin-right:-10.800px"> 42774<span class="z">0</span>7 </span><span class="c">扇区</span></div>
<div class="a" style="left:941px;top:139px;width:17px;height:352px;background:#f1f1f1;"></div>
<div class="a" style="left:941px;top:182px;width:1px;height:309px;background:#fafafa;"></div>
<div class="a" style="left:942px;top:156px;width:15px;height:317px;background:#cbcbcb;"></div>
<svg class="a" style="left:941px;top:139.5px" width="17" height="18" viewBox="0 0 17 18"><path d="M5.200 10.700 L8.500 7.300 L11.800 10.700" fill="none" stroke="#505050" stroke-width="2"/></svg>
<svg class="a" style="left:941px;top:474px" width="17" height="18" viewBox="0 0 17 18"><path d="M5.200 6.800 L8.500 10.200 L11.800 6.800" fill="none" stroke="#505050" stroke-width="2"/></svg>
<svg class="a" style="left:486px;top:182px" width="455" height="101" viewBox="0 0 455 101"><defs><pattern id="tg" x="2" y="1" width="11" height="11" patternUnits="userSpaceOnUse"><rect width="10" height="10" fill="#70a8aa"/></pattern></defs>
<rect x="2" y="1" width="451" height="99" fill="url(#tg)"/><rect x="2" y="1" width="10" height="2" fill="#00ff00"/><rect x="2" y="3" width="10" height="2" fill="#fe0000"/><rect x="2" y="5" width="10" height="2" fill="#0000fe"/><rect x="2" y="7" width="10" height="2" fill="#8583c7"/><rect x="2" y="9" width="10" height="2" fill="#007a00"/><rect x="2" y="11" width="2" height="1" fill="#007a00"/><rect x="13" y="1" width="10" height="3" fill="#0000fe"/><rect x="13" y="4" width="4" height="1" fill="#0000fe"/><rect x="17" y="4" width="6" height="1" fill="#8583c7"/><rect x="13" y="5" width="10" height="2" fill="#8583c7"/><rect x="13" y="7" width="8" height="1" fill="#8583c7"/><rect x="21" y="7" width="2" height="1" fill="#007a00"/><rect x="13" y="8" width="10" height="3" fill="#007a00"/><rect x="13" y="11" width="2" height="1" fill="#007a00"/><rect x="24" y="1" width="10" height="2" fill="#fe0000"/><rect x="24" y="3" width="10" height="2" fill="#0000fe"/><rect x="24" y="5" width="10" height="2" fill="#8583c7"/><rect x="24" y="7" width="10" height="2" fill="#8583c7"/><rect x="24" y="9" width="10" height="2" fill="#007a00"/><rect x="24" y="11" width="2" height="1" fill="#007a00"/><rect x="35" y="1" width="10" height="3" fill="#0000fe"/><rect x="35" y="4" width="4" height="1" fill="#0000fe"/><rect x="39" y="4" width="6" height="1" fill="#8583c7"/><rect x="35" y="5" width="10" height="2" fill="#8583c7"/><rect x="35" y="7" width="8" height="1" fill="#8583c7"/><rect x="43" y="7" width="2" height="1" fill="#007a00"/><rect x="35" y="8" width="10" height="3" fill="#007a00"/><rect x="35" y="11" width="2" height="1" fill="#007a00"/><rect x="46" y="1" width="10" height="2" fill="#ffa95a"/><rect x="46" y="3" width="5" height="1" fill="#ffa95a"/><rect x="51" y="3" width="5" height="1" fill="#0000fe"/><rect x="46" y="4" width="10" height="2" fill="#0000fe"/><rect x="46" y="6" width="10" height="2" fill="#8583c7"/><rect x="46" y="8" width="5" height="1" fill="#8583c7"/><rect x="51" y="8" width="5" height="1" fill="#007a00"/><rect x="46" y="9" width="10" height="2" fill="#007a00"/><rect x="46" y="11" width="2" height="1" fill="#007a00"/><rect x="57" y="1" width="10" height="2" fill="#ffa95a"/><rect x="57" y="3" width="10" height="2" fill="#0000fe"/><rect x="57" y="5" width="10" height="2" fill="#00ffff"/><rect x="57" y="7" width="10" height="2" fill="#8583c7"/><rect x="57" y="9" width="10" height="2" fill="#007a00"/><rect x="57" y="11" width="2" height="1" fill="#007a00"/><rect x="68" y="1" width="10" height="2" fill="#ffff00"/><rect x="68" y="3" width="5" height="1" fill="#ffff00"/><rect x="73" y="3" width="5" height="1" fill="#0000fe"/><rect x="68" y="4" width="10" height="2" fill="#0000fe"/><rect x="68" y="6" width="10" height="2" fill="#8583c7"/><rect x="68" y="8" width="5" height="1" fill="#8583c7"/><rect x="73" y="8" width="5" height="1" fill="#007a00"/><rect x="68" y="9" width="10" height="2" fill="#007a00"/><rect x="68" y="11" width="2" height="1" fill="#007a00"/><rect x="79" y="1" width="10" height="2" fill="#ffff00"/><rect x="79" y="3" width="10" height="2" fill="#fe0000"/><rect x="79" y="5" width="10" height="2" fill="#0000fe"/><rect x="79" y="7" width="10" height="2" fill="#8583c7"/><rect x="79" y="9" width="10" height="2" fill="#007a00"/><rect x="79" y="11" width="2" height="1" fill="#007a00"/><rect x="90" y="1" width="10" height="3" fill="#0000fe"/><rect x="90" y="4" width="4" height="1" fill="#0000fe"/><rect x="94" y="4" width="6" height="1" fill="#8583c7"/><rect x="90" y="5" width="10" height="2" fill="#8583c7"/><rect x="90" y="7" width="8" height="1" fill="#8583c7"/><rect x="98" y="7" width="2" height="1" fill="#007a00"/><rect x="90" y="8" width="10" height="3" fill="#007a00"/><rect x="90" y="11" width="2" height="1" fill="#007a00"/><rect x="101" y="1" width="10" height="2" fill="#ffff00"/><rect x="101" y="3" width="5" height="1" fill="#ffff00"/><rect x="106" y="3" width="5" height="1" fill="#0000fe"/><rect x="101" y="4" width="10" height="2" fill="#0000fe"/><rect x="101" y="6" width="10" height="2" fill="#8583c7"/><rect x="101" y="8" width="5" height="1" fill="#8583c7"/><rect x="106" y="8" width="5" height="1" fill="#007a00"/><rect x="101" y="9" width="10" height="2" fill="#007a00"/><rect x="101" y="11" width="2" height="1" fill="#007a00"/><rect x="112" y="1" width="10" height="2" fill="#ffff00"/><rect x="112" y="3" width="10" height="2" fill="#0000fe"/><rect x="112" y="5" width="10" height="2" fill="#8583c7"/><rect x="112" y="7" width="10" height="2" fill="#ff007f"/><rect x="112" y="9" width="10" height="2" fill="#007a00"/><rect x="112" y="11" width="2" height="1" fill="#007a00"/><rect x="123" y="1" width="10" height="3" fill="#0000fe"/><rect x="123" y="4" width="4" height="1" fill="#0000fe"/><rect x="127" y="4" width="6" height="1" fill="#8583c7"/><rect x="123" y="5" width="10" height="2" fill="#8583c7"/><rect x="123" y="7" width="8" height="1" fill="#8583c7"/><rect x="131" y="7" width="2" height="1" fill="#007a00"/><rect x="123" y="8" width="10" height="3" fill="#007a00"/><rect x="123" y="11" width="2" height="1" fill="#007a00"/><rect x="134" y="1" width="10" height="2" fill="#ffff00"/><rect x="134" y="3" width="5" height="1" fill="#ffff00"/><rect x="139" y="3" width="5" height="1" fill="#0000fe"/><rect x="134" y="4" width="10" height="2" fill="#0000fe"/><rect x="134" y="6" width="10" height="2" fill="#8583c7"/><rect x="134" y="8" width="5" height="1" fill="#8583c7"/><rect x="139" y="8" width="5" height="1" fill="#007a00"/><rect x="134" y="9" width="10" height="2" fill="#007a00"/><rect x="134" y="11" width="2" height="1" fill="#007a00"/><rect x="145" y="1" width="10" height="3" fill="#0000fe"/><rect x="145" y="4" width="4" height="1" fill="#0000fe"/><rect x="149" y="4" width="6" height="1" fill="#8583c7"/><rect x="145" y="5" width="10" height="2" fill="#8583c7"/><rect x="145" y="7" width="8" height="1" fill="#8583c7"/><rect x="153" y="7" width="2" height="1" fill="#007a00"/><rect x="145" y="8" width="10" height="3" fill="#007a00"/><rect x="145" y="11" width="2" height="1" fill="#007a00"/><rect x="156" y="1" width="10" height="2" fill="#ffff00"/><rect x="156" y="3" width="5" height="1" fill="#ffff00"/><rect x="161" y="3" width="5" height="1" fill="#0000fe"/><rect x="156" y="4" width="10" height="2" fill="#0000fe"/><rect x="156" y="6" width="10" height="2" fill="#8583c7"/><rect x="156" y="8" width="5" height="1" fill="#8583c7"/><rect x="161" y="8" width="5" height="1" fill="#007a00"/><rect x="156" y="9" width="10" height="2" fill="#007a00"/><rect x="156" y="11" width="2" height="1" fill="#007a00"/><rect x="167" y="1" width="10" height="2" fill="#ffa95a"/><rect x="167" y="3" width="10" height="2" fill="#0000fe"/><rect x="167" y="5" width="10" height="2" fill="#00ffff"/><rect x="167" y="7" width="10" height="2" fill="#8583c7"/><rect x="167" y="9" width="10" height="2" fill="#007a00"/><rect x="167" y="11" width="2" height="1" fill="#007a00"/><rect x="178" y="1" width="10" height="3" fill="#0000fe"/><rect x="178" y="4" width="4" height="1" fill="#0000fe"/><rect x="182" y="4" width="6" height="1" fill="#8583c7"/><rect x="178" y="5" width="10" height="2" fill="#8583c7"/><rect x="178" y="7" width="8" height="1" fill="#8583c7"/><rect x="186" y="7" width="2" height="1" fill="#007a00"/><rect x="178" y="8" width="10" height="3" fill="#007a00"/><rect x="178" y="11" width="2" height="1" fill="#007a00"/><rect x="189" y="1" width="10" height="3" fill="#0000fe"/><rect x="189" y="4" width="4" height="1" fill="#0000fe"/><rect x="193" y="4" width="6" height="1" fill="#8583c7"/><rect x="189" y="5" width="10" height="2" fill="#8583c7"/><rect x="189" y="7" width="8" height="1" fill="#8583c7"/><rect x="197" y="7" width="2" height="1" fill="#007a00"/><rect x="189" y="8" width="10" height="3" fill="#007a00"/><rect x="189" y="11" width="2" height="1" fill="#007a00"/><rect x="200" y="1" width="10" height="2" fill="#0000fe"/><rect x="200" y="3" width="5" height="1" fill="#0000fe"/><rect x="205" y="3" width="5" height="1" fill="#8583c7"/><rect x="200" y="4" width="10" height="2" fill="#8583c7"/><rect x="200" y="6" width="10" height="2" fill="#ff007f"/><rect x="200" y="8" width="5" height="1" fill="#ff007f"/><rect x="205" y="8" width="5" height="1" fill="#007a00"/><rect x="200" y="9" width="10" height="2" fill="#007a00"/><rect x="200" y="11" width="2" height="1" fill="#007a00"/><rect x="211" y="1" width="10" height="2" fill="#ffff00"/><rect x="211" y="3" width="10" height="2" fill="#0000fe"/><rect x="211" y="5" width="10" height="2" fill="#8583c7"/><rect x="211" y="7" width="10" height="2" fill="#ff007f"/><rect x="211" y="9" width="10" height="2" fill="#007a00"/><rect x="211" y="11" width="2" height="1" fill="#007a00"/><rect x="222" y="1" width="10" height="2" fill="#0000fe"/><rect x="222" y="3" width="5" height="1" fill="#0000fe"/><rect x="227" y="3" width="5" height="1" fill="#8583c7"/><rect x="222" y="4" width="10" height="2" fill="#8583c7"/><rect x="222" y="6" width="10" height="2" fill="#ff007f"/><rect x="222" y="8" width="5" height="1" fill="#ff007f"/><rect x="227" y="8" width="5" height="1" fill="#007a00"/><rect x="222" y="9" width="10" height="2" fill="#007a00"/><rect x="222" y="11" width="2" height="1" fill="#007a00"/><rect x="233" y="1" width="10" height="2" fill="#ffa95a"/><rect x="233" y="3" width="10" height="2" fill="#0000fe"/><rect x="233" y="5" width="10" height="2" fill="#8583c7"/><rect x="233" y="7" width="10" height="2" fill="#ff007f"/><rect x="233" y="9" width="10" height="2" fill="#007a00"/><rect x="233" y="11" width="2" height="1" fill="#007a00"/><rect x="244" y="1" width="10" height="3" fill="#ffa95a"/><rect x="244" y="4" width="4" height="1" fill="#ffa95a"/><rect x="248" y="4" width="6" height="1" fill="#8583c7"/><rect x="244" y="5" width="10" height="2" fill="#8583c7"/><rect x="244" y="7" width="8" height="1" fill="#8583c7"/><rect x="252" y="7" width="2" height="1" fill="#007a00"/><rect x="244" y="8" width="10" height="3" fill="#007a00"/><rect x="244" y="11" width="2" height="1" fill="#007a00"/><rect x="255" y="1" width="10" height="3" fill="#0000fe"/><rect x="255" y="4" width="4" height="1" fill="#0000fe"/><rect x="259" y="4" width="6" height="1" fill="#8583c7"/><rect x="255" y="5" width="10" height="2" fill="#8583c7"/><rect x="255" y="7" width="8" height="1" fill="#8583c7"/><rect x="263" y="7" width="2" height="1" fill="#007a00"/><rect x="255" y="8" width="10" height="3" fill="#007a00"/><rect x="255" y="11" width="2" height="1" fill="#007a00"/><rect x="266" y="1" width="10" height="2" fill="#0000fe"/><rect x="266" y="3" width="5" height="1" fill="#0000fe"/><rect x="271" y="3" width="5" height="1" fill="#8583c7"/><rect x="266" y="4" width="10" height="2" fill="#8583c7"/><rect x="266" y="6" width="10" height="2" fill="#ff007f"/><rect x="266" y="8" width="5" height="1" fill="#ff007f"/><rect x="271" y="8" width="5" height="1" fill="#007a00"/><rect x="266" y="9" width="10" height="2" fill="#007a00"/><rect x="266" y="11" width="2" height="1" fill="#007a00"/><rect x="277" y="1" width="10" height="3" fill="#0000fe"/><rect x="277" y="4" width="4" height="1" fill="#0000fe"/><rect x="281" y="4" width="6" height="1" fill="#8583c7"/><rect x="277" y="5" width="10" height="2" fill="#8583c7"/><rect x="277" y="7" width="8" height="1" fill="#8583c7"/><rect x="285" y="7" width="2" height="1" fill="#007a00"/><rect x="277" y="8" width="10" height="3" fill="#007a00"/><rect x="277" y="11" width="2" height="1" fill="#007a00"/><rect x="288" y="1" width="10" height="2" fill="#0000fe"/><rect x="288" y="3" width="5" height="1" fill="#0000fe"/><rect x="293" y="3" width="5" height="1" fill="#8583c7"/><rect x="288" y="4" width="10" height="2" fill="#8583c7"/><rect x="288" y="6" width="10" height="2" fill="#ff007f"/><rect x="288" y="8" width="5" height="1" fill="#ff007f"/><rect x="293" y="8" width="5" height="1" fill="#007a00"/><rect x="288" y="9" width="10" height="2" fill="#007a00"/><rect x="288" y="11" width="2" height="1" fill="#007a00"/><rect x="299" y="1" width="10" height="3" fill="#0000fe"/><rect x="299" y="4" width="4" height="1" fill="#0000fe"/><rect x="303" y="4" width="6" height="1" fill="#8583c7"/><rect x="299" y="5" width="10" height="2" fill="#8583c7"/><rect x="299" y="7" width="8" height="1" fill="#8583c7"/><rect x="307" y="7" width="2" height="1" fill="#007a00"/><rect x="299" y="8" width="10" height="3" fill="#007a00"/><rect x="299" y="11" width="2" height="1" fill="#007a00"/><rect x="310" y="1" width="10" height="2" fill="#0000fe"/><rect x="310" y="3" width="5" height="1" fill="#0000fe"/><rect x="315" y="3" width="5" height="1" fill="#8583c7"/><rect x="310" y="4" width="10" height="2" fill="#8583c7"/><rect x="310" y="6" width="10" height="2" fill="#ff007f"/><rect x="310" y="8" width="5" height="1" fill="#ff007f"/><rect x="315" y="8" width="5" height="1" fill="#007a00"/><rect x="310" y="9" width="10" height="2" fill="#007a00"/><rect x="310" y="11" width="2" height="1" fill="#007a00"/><rect x="321" y="1" width="10" height="5" fill="#8583c7"/><rect x="321" y="6" width="10" height="5" fill="#007a00"/><rect x="332" y="1" width="10" height="3" fill="#0000fe"/><rect x="332" y="4" width="4" height="1" fill="#0000fe"/><rect x="336" y="4" width="6" height="1" fill="#8583c7"/><rect x="332" y="5" width="10" height="2" fill="#8583c7"/><rect x="332" y="7" width="8" height="1" fill="#8583c7"/><rect x="340" y="7" width="2" height="1" fill="#007a00"/><rect x="332" y="8" width="10" height="3" fill="#007a00"/><rect x="332" y="11" width="2" height="1" fill="#007a00"/><rect x="343" y="1" width="10" height="2" fill="#0000fe"/><rect x="343" y="3" width="10" height="2" fill="#8583c7"/><rect x="343" y="5" width="10" height="2" fill="#7f7f00"/><rect x="343" y="7" width="10" height="2" fill="#ff007f"/><rect x="343" y="9" width="10" height="2" fill="#007a00"/><rect x="343" y="11" width="2" height="1" fill="#007a00"/><rect x="354" y="1" width="10" height="3" fill="#0000fe"/><rect x="354" y="4" width="4" height="1" fill="#0000fe"/><rect x="358" y="4" width="6" height="1" fill="#8583c7"/><rect x="354" y="5" width="10" height="2" fill="#8583c7"/><rect x="354" y="7" width="8" height="1" fill="#8583c7"/><rect x="362" y="7" width="2" height="1" fill="#007a00"/><rect x="354" y="8" width="10" height="3" fill="#007a00"/><rect x="354" y="11" width="2" height="1" fill="#007a00"/><rect x="365" y="1" width="10" height="3" fill="#0000fe"/><rect x="365" y="4" width="4" height="1" fill="#0000fe"/><rect x="369" y="4" width="6" height="1" fill="#8583c7"/><rect x="365" y="5" width="10" height="2" fill="#8583c7"/><rect x="365" y="7" width="8" height="1" fill="#8583c7"/><rect x="373" y="7" width="2" height="1" fill="#007a00"/><rect x="365" y="8" width="10" height="3" fill="#007a00"/><rect x="365" y="11" width="2" height="1" fill="#007a00"/><rect x="376" y="1" width="10" height="2" fill="#0000fe"/><rect x="376" y="3" width="5" height="1" fill="#0000fe"/><rect x="381" y="3" width="5" height="1" fill="#8583c7"/><rect x="376" y="4" width="10" height="2" fill="#8583c7"/><rect x="376" y="6" width="10" height="2" fill="#ff007f"/><rect x="376" y="8" width="5" height="1" fill="#ff007f"/><rect x="381" y="8" width="5" height="1" fill="#007a00"/><rect x="376" y="9" width="10" height="2" fill="#007a00"/><rect x="376" y="11" width="2" height="1" fill="#007a00"/><rect x="387" y="1" width="10" height="2" fill="#0000fe"/><rect x="387" y="3" width="5" height="1" fill="#0000fe"/><rect x="392" y="3" width="5" height="1" fill="#8583c7"/><rect x="387" y="4" width="10" height="2" fill="#8583c7"/><rect x="387" y="6" width="10" height="2" fill="#ff007f"/><rect x="387" y="8" width="5" height="1" fill="#ff007f"/><rect x="392" y="8" width="5" height="1" fill="#007a00"/><rect x="387" y="9" width="10" height="2" fill="#007a00"/><rect x="387" y="11" width="2" height="1" fill="#007a00"/><rect x="398" y="1" width="10" height="3" fill="#0000fe"/><rect x="398" y="4" width="4" height="1" fill="#0000fe"/><rect x="402" y="4" width="6" height="1" fill="#8583c7"/><rect x="398" y="5" width="10" height="2" fill="#8583c7"/><rect x="398" y="7" width="8" height="1" fill="#8583c7"/><rect x="406" y="7" width="2" height="1" fill="#007a00"/><rect x="398" y="8" width="10" height="3" fill="#007a00"/><rect x="398" y="11" width="2" height="1" fill="#007a00"/><rect x="409" y="1" width="10" height="2" fill="#ffff00"/><rect x="409" y="3" width="5" height="1" fill="#ffff00"/><rect x="414" y="3" width="5" height="1" fill="#0000fe"/><rect x="409" y="4" width="10" height="2" fill="#0000fe"/><rect x="409" y="6" width="10" height="2" fill="#8583c7"/><rect x="409" y="8" width="5" height="1" fill="#8583c7"/><rect x="414" y="8" width="5" height="1" fill="#007a00"/><rect x="409" y="9" width="10" height="2" fill="#007a00"/><rect x="409" y="11" width="2" height="1" fill="#007a00"/><rect x="420" y="1" width="10" height="5" fill="#8583c7"/><rect x="420" y="6" width="10" height="5" fill="#007a00"/><rect x="431" y="1" width="10" height="3" fill="#0000fe"/><rect x="431" y="4" width="4" height="1" fill="#0000fe"/><rect x="435" y="4" width="6" height="1" fill="#8583c7"/><rect x="431" y="5" width="10" height="2" fill="#8583c7"/><rect x="431" y="7" width="8" height="1" fill="#8583c7"/><rect x="439" y="7" width="2" height="1" fill="#007a00"/><rect x="431" y="8" width="10" height="3" fill="#007a00"/><rect x="431" y="11" width="2" height="1" fill="#007a00"/><rect x="442" y="1" width="10" height="3" fill="#0000fe"/><rect x="442" y="4" width="4" height="1" fill="#0000fe"/><rect x="446" y="4" width="6" height="1" fill="#8583c7"/><rect x="442" y="5" width="10" height="2" fill="#8583c7"/><rect x="442" y="7" width="8" height="1" fill="#8583c7"/><rect x="450" y="7" width="2" height="1" fill="#007a00"/><rect x="442" y="8" width="10" height="3" fill="#007a00"/><rect x="442" y="11" width="2" height="1" fill="#007a00"/><rect x="2" y="12" width="10" height="2" fill="#ffff00"/><rect x="2" y="14" width="10" height="2" fill="#0000fe"/><rect x="2" y="16" width="10" height="2" fill="#8583c7"/><rect x="2" y="18" width="10" height="2" fill="#ff007f"/><rect x="2" y="20" width="10" height="2" fill="#007a00"/><rect x="2" y="22" width="2" height="1" fill="#007a00"/><rect x="13" y="12" width="10" height="2" fill="#0000fe"/><rect x="13" y="14" width="5" height="1" fill="#0000fe"/><rect x="18" y="14" width="5" height="1" fill="#8583c7"/><rect x="13" y="15" width="10" height="2" fill="#8583c7"/><rect x="13" y="17" width="10" height="2" fill="#7f7f00"/><rect x="13" y="19" width="5" height="1" fill="#7f7f00"/><rect x="18" y="19" width="5" height="1" fill="#007a00"/><rect x="13" y="20" width="10" height="2" fill="#007a00"/><rect x="13" y="22" width="2" height="1" fill="#007a00"/><rect x="24" y="12" width="10" height="3" fill="#ffff00"/><rect x="24" y="15" width="4" height="1" fill="#ffff00"/><rect x="28" y="15" width="6" height="1" fill="#8583c7"/><rect x="24" y="16" width="10" height="2" fill="#8583c7"/><rect x="24" y="18" width="8" height="1" fill="#8583c7"/><rect x="32" y="18" width="2" height="1" fill="#007a00"/><rect x="24" y="19" width="10" height="3" fill="#007a00"/><rect x="24" y="22" width="2" height="1" fill="#007a00"/><rect x="35" y="12" width="10" height="5" fill="#8583c7"/><rect x="35" y="17" width="10" height="5" fill="#ff007f"/><rect x="46" y="12" width="10" height="3" fill="#0000fe"/><rect x="46" y="15" width="4" height="1" fill="#0000fe"/><rect x="50" y="15" width="6" height="1" fill="#8583c7"/><rect x="46" y="16" width="10" height="2" fill="#8583c7"/><rect x="46" y="18" width="8" height="1" fill="#8583c7"/><rect x="54" y="18" width="2" height="1" fill="#007a00"/><rect x="46" y="19" width="10" height="3" fill="#007a00"/><rect x="46" y="22" width="2" height="1" fill="#007a00"/><rect x="57" y="12" width="10" height="3" fill="#0000fe"/><rect x="57" y="15" width="4" height="1" fill="#0000fe"/><rect x="61" y="15" width="6" height="1" fill="#8583c7"/><rect x="57" y="16" width="10" height="2" fill="#8583c7"/><rect x="57" y="18" width="8" height="1" fill="#8583c7"/><rect x="65" y="18" width="2" height="1" fill="#007a00"/><rect x="57" y="19" width="10" height="3" fill="#007a00"/><rect x="57" y="22" width="2" height="1" fill="#007a00"/><rect x="68" y="12" width="10" height="2" fill="#ffff00"/><rect x="68" y="14" width="5" height="1" fill="#ffff00"/><rect x="73" y="14" width="5" height="1" fill="#0000fe"/><rect x="68" y="15" width="10" height="2" fill="#0000fe"/><rect x="68" y="17" width="10" height="2" fill="#8583c7"/><rect x="68" y="19" width="5" height="1" fill="#8583c7"/><rect x="73" y="19" width="5" height="1" fill="#007a00"/><rect x="68" y="20" width="10" height="2" fill="#007a00"/><rect x="68" y="22" width="2" height="1" fill="#007a00"/><rect x="79" y="12" width="10" height="5" fill="#8583c7"/><rect x="79" y="17" width="10" height="5" fill="#007a00"/><rect x="101" y="12" width="10" height="5" fill="#8583c7"/><rect x="101" y="17" width="10" height="5" fill="#007a00"/><rect x="112" y="12" width="10" height="5" fill="#8583c7"/><rect x="112" y="17" width="10" height="5" fill="#007a00"/><rect x="123" y="12" width="10" height="3" fill="#8583c7"/><rect x="123" y="15" width="4" height="1" fill="#8583c7"/><rect x="127" y="15" width="6" height="1" fill="#80ffff"/><rect x="123" y="16" width="10" height="2" fill="#80ffff"/><rect x="123" y="18" width="8" height="1" fill="#80ffff"/><rect x="131" y="18" width="2" height="1" fill="#ff007f"/><rect x="123" y="19" width="10" height="3" fill="#ff007f"/><rect x="123" y="22" width="2" height="1" fill="#ff007f"/><rect x="134" y="12" width="10" height="5" fill="#8583c7"/><rect x="134" y="17" width="10" height="5" fill="#007a00"/><rect x="145" y="12" width="10" height="5" fill="#8583c7"/><rect x="145" y="17" width="10" height="5" fill="#007a00"/><rect x="156" y="12" width="10" height="5" fill="#8583c7"/><rect x="156" y="17" width="10" height="5" fill="#007a00"/><rect x="167" y="12" width="10" height="10" fill="#8583c7"/><rect x="189" y="12" width="10" height="3" fill="#ffff00"/><rect x="189" y="15" width="4" height="1" fill="#ffff00"/><rect x="193" y="15" width="6" height="1" fill="#8583c7"/><rect x="189" y="16" width="10" height="2" fill="#8583c7"/><rect x="189" y="18" width="8" height="1" fill="#8583c7"/><rect x="197" y="18" width="2" height="1" fill="#007a00"/><rect x="189" y="19" width="10" height="3" fill="#007a00"/><rect x="189" y="22" width="2" height="1" fill="#007a00"/><rect x="200" y="12" width="10" height="3" fill="#8583c7"/><rect x="200" y="15" width="4" height="1" fill="#8583c7"/><rect x="204" y="15" width="6" height="1" fill="#ff007f"/><rect x="200" y="16" width="10" height="2" fill="#ff007f"/><rect x="200" y="18" width="8" height="1" fill="#ff007f"/><rect x="208" y="18" width="2" height="1" fill="#007a00"/><rect x="200" y="19" width="10" height="3" fill="#007a00"/><rect x="200" y="22" width="2" height="1" fill="#007a00"/><rect x="211" y="12" width="10" height="2" fill="#fe0000"/><rect x="211" y="14" width="10" height="2" fill="#0000fe"/><rect x="211" y="16" width="10" height="2" fill="#8583c7"/><rect x="211" y="18" width="10" height="2" fill="#ff007f"/><rect x="211" y="20" width="10" height="2" fill="#007a00"/><rect x="211" y="22" width="2" height="1" fill="#007a00"/><rect x="222" y="12" width="10" height="3" fill="#80ffc3"/><rect x="222" y="15" width="4" height="1" fill="#80ffc3"/><rect x="226" y="15" width="6" height="1" fill="#8583c7"/><rect x="222" y="16" width="10" height="2" fill="#8583c7"/><rect x="222" y="18" width="8" height="1" fill="#8583c7"/><rect x="230" y="18" width="2" height="1" fill="#007a00"/><rect x="222" y="19" width="10" height="3" fill="#007a00"/><rect x="222" y="22" width="2" height="1" fill="#007a00"/><rect x="233" y="12" width="10" height="2" fill="#ffff00"/><rect x="233" y="14" width="5" height="1" fill="#ffff00"/><rect x="238" y="14" width="5" height="1" fill="#80ffc3"/><rect x="233" y="15" width="10" height="2" fill="#80ffc3"/><rect x="233" y="17" width="10" height="2" fill="#8583c7"/><rect x="233" y="19" width="5" height="1" fill="#8583c7"/><rect x="238" y="19" width="5" height="1" fill="#007a00"/><rect x="233" y="20" width="10" height="2" fill="#007a00"/><rect x="233" y="22" width="2" height="1" fill="#007a00"/><rect x="244" y="12" width="10" height="5" fill="#8583c7"/><rect x="244" y="17" width="10" height="5" fill="#007a00"/><rect x="255" y="12" width="10" height="3" fill="#0000fe"/><rect x="255" y="15" width="4" height="1" fill="#0000fe"/><rect x="259" y="15" width="6" height="1" fill="#8583c7"/><rect x="255" y="16" width="10" height="2" fill="#8583c7"/><rect x="255" y="18" width="8" height="1" fill="#8583c7"/><rect x="263" y="18" width="2" height="1" fill="#007a00"/><rect x="255" y="19" width="10" height="3" fill="#007a00"/><rect x="255" y="22" width="2" height="1" fill="#007a00"/><rect x="266" y="12" width="10" height="2" fill="#ffff00"/><rect x="266" y="14" width="5" height="1" fill="#ffff00"/><rect x="271" y="14" width="5" height="1" fill="#8583c7"/><rect x="266" y="15" width="10" height="2" fill="#8583c7"/><rect x="266" y="17" width="10" height="2" fill="#ff007f"/><rect x="266" y="19" width="5" height="1" fill="#ff007f"/><rect x="271" y="19" width="5" height="1" fill="#007a00"/><rect x="266" y="20" width="10" height="2" fill="#007a00"/><rect x="266" y="22" width="2" height="1" fill="#007a00"/><rect x="277" y="12" width="10" height="5" fill="#8583c7"/><rect x="277" y="17" width="10" height="5" fill="#007a00"/><rect x="288" y="12" width="10" height="5" fill="#8583c7"/><rect x="288" y="17" width="10" height="5" fill="#ff007f"/><rect x="299" y="12" width="10" height="3" fill="#8583c7"/><rect x="299" y="15" width="4" height="1" fill="#8583c7"/><rect x="303" y="15" width="6" height="1" fill="#ff007f"/><rect x="299" y="16" width="10" height="2" fill="#ff007f"/><rect x="299" y="18" width="8" height="1" fill="#ff007f"/><rect x="307" y="18" width="2" height="1" fill="#007a00"/><rect x="299" y="19" width="10" height="3" fill="#007a00"/><rect x="299" y="22" width="2" height="1" fill="#007a00"/><rect x="310" y="12" width="10" height="5" fill="#8583c7"/><rect x="310" y="17" width="10" height="5" fill="#007a00"/><rect x="321" y="12" width="10" height="5" fill="#8583c7"/><rect x="321" y="17" width="10" height="5" fill="#007a00"/><rect x="332" y="12" width="10" height="10" fill="#8583c7"/><rect x="343" y="12" width="10" height="5" fill="#8583c7"/><rect x="343" y="17" width="10" height="5" fill="#007a00"/><rect x="354" y="12" width="10" height="5" fill="#8583c7"/><rect x="354" y="17" width="10" height="5" fill="#007a00"/><rect x="365" y="12" width="10" height="5" fill="#8583c7"/><rect x="365" y="17" width="10" height="5" fill="#007a00"/><rect x="376" y="12" width="10" height="10" fill="#8583c7"/><rect x="387" y="12" width="10" height="5" fill="#8583c7"/><rect x="387" y="17" width="10" height="5" fill="#ff007f"/><rect x="398" y="12" width="10" height="10" fill="#8583c7"/><rect x="409" y="12" width="10" height="5" fill="#8583c7"/><rect x="409" y="17" width="10" height="5" fill="#007a00"/><rect x="420" y="12" width="10" height="5" fill="#8583c7"/><rect x="420" y="17" width="10" height="5" fill="#ff007f"/><rect x="431" y="12" width="10" height="10" fill="#8583c7"/><rect x="2" y="23" width="10" height="10" fill="#8583c7"/><rect x="13" y="23" width="10" height="3" fill="#ffa95a"/><rect x="13" y="26" width="4" height="1" fill="#ffa95a"/><rect x="17" y="26" width="6" height="1" fill="#8583c7"/><rect x="13" y="27" width="10" height="2" fill="#8583c7"/><rect x="13" y="29" width="8" height="1" fill="#8583c7"/><rect x="21" y="29" width="2" height="1" fill="#007a00"/><rect x="13" y="30" width="10" height="3" fill="#007a00"/><rect x="13" y="33" width="2" height="1" fill="#007a00"/><rect x="24" y="23" width="10" height="3" fill="#ffa95a"/><rect x="24" y="26" width="4" height="1" fill="#ffa95a"/><rect x="28" y="26" width="6" height="1" fill="#00ffff"/><rect x="24" y="27" width="10" height="2" fill="#00ffff"/><rect x="24" y="29" width="8" height="1" fill="#00ffff"/><rect x="32" y="29" width="2" height="1" fill="#8583c7"/><rect x="24" y="30" width="10" height="3" fill="#8583c7"/><rect x="24" y="33" width="2" height="1" fill="#8583c7"/><rect x="134" y="23" width="10" height="3" fill="#8583c7"/><rect x="134" y="26" width="4" height="1" fill="#8583c7"/><rect x="138" y="26" width="6" height="1" fill="#ff007f"/><rect x="134" y="27" width="10" height="2" fill="#ff007f"/><rect x="134" y="29" width="8" height="1" fill="#ff007f"/><rect x="142" y="29" width="2" height="1" fill="#007a00"/><rect x="134" y="30" width="10" height="3" fill="#007a00"/><rect x="134" y="33" width="2" height="1" fill="#007a00"/><rect x="145" y="23" width="10" height="3" fill="#ffff00"/><rect x="145" y="26" width="4" height="1" fill="#ffff00"/><rect x="149" y="26" width="6" height="1" fill="#8583c7"/><rect x="145" y="27" width="10" height="2" fill="#8583c7"/><rect x="145" y="29" width="8" height="1" fill="#8583c7"/><rect x="153" y="29" width="2" height="1" fill="#007a00"/><rect x="145" y="30" width="10" height="3" fill="#007a00"/><rect x="145" y="33" width="2" height="1" fill="#007a00"/><rect x="156" y="23" width="10" height="10" fill="#8583c7"/><rect x="167" y="23" width="10" height="10" fill="#8583c7"/><rect x="178" y="23" width="10" height="10" fill="#8583c7"/><rect x="189" y="23" width="10" height="3" fill="#ffff00"/><rect x="189" y="26" width="4" height="1" fill="#ffff00"/><rect x="193" y="26" width="6" height="1" fill="#8583c7"/><rect x="189" y="27" width="10" height="2" fill="#8583c7"/><rect x="189" y="29" width="8" height="1" fill="#8583c7"/><rect x="197" y="29" width="2" height="1" fill="#007a00"/><rect x="189" y="30" width="10" height="3" fill="#007a00"/><rect x="189" y="33" width="2" height="1" fill="#007a00"/><rect x="200" y="23" width="10" height="5" fill="#8583c7"/><rect x="200" y="28" width="10" height="5" fill="#007a00"/><rect x="211" y="23" width="10" height="10" fill="#8583c7"/><rect x="222" y="23" width="10" height="10" fill="#8583c7"/><rect x="233" y="23" width="10" height="2" fill="#ffa95a"/><rect x="233" y="25" width="10" height="2" fill="#0000fe"/><rect x="233" y="27" width="10" height="2" fill="#00ffff"/><rect x="233" y="29" width="10" height="2" fill="#8583c7"/><rect x="233" y="31" width="10" height="2" fill="#007a00"/><rect x="233" y="33" width="2" height="1" fill="#007a00"/><rect x="244" y="23" width="10" height="2" fill="#0000fe"/><rect x="244" y="25" width="5" height="1" fill="#0000fe"/><rect x="249" y="25" width="5" height="1" fill="#8583c7"/><rect x="244" y="26" width="10" height="2" fill="#8583c7"/><rect x="244" y="28" width="10" height="2" fill="#ff007f"/><rect x="244" y="30" width="5" height="1" fill="#ff007f"/><rect x="249" y="30" width="5" height="1" fill="#007a00"/><rect x="244" y="31" width="10" height="2" fill="#007a00"/><rect x="244" y="33" width="2" height="1" fill="#007a00"/><rect x="255" y="23" width="10" height="3" fill="#0000fe"/><rect x="255" y="26" width="4" height="1" fill="#0000fe"/><rect x="259" y="26" width="6" height="1" fill="#8583c7"/><rect x="255" y="27" width="10" height="2" fill="#8583c7"/><rect x="255" y="29" width="8" height="1" fill="#8583c7"/><rect x="263" y="29" width="2" height="1" fill="#007a00"/><rect x="255" y="30" width="10" height="3" fill="#007a00"/><rect x="255" y="33" width="2" height="1" fill="#007a00"/><rect x="288" y="23" width="10" height="2" fill="#ffa95a"/><rect x="288" y="25" width="10" height="2" fill="#0000fe"/><rect x="288" y="27" width="10" height="2" fill="#00ffff"/><rect x="288" y="29" width="10" height="2" fill="#8583c7"/><rect x="288" y="31" width="10" height="2" fill="#007a00"/><rect x="288" y="33" width="2" height="1" fill="#007a00"/><rect x="299" y="23" width="10" height="2" fill="#ffa95a"/><rect x="299" y="25" width="10" height="2" fill="#0000fe"/><rect x="299" y="27" width="10" height="2" fill="#00ffff"/><rect x="299" y="29" width="10" height="2" fill="#8583c7"/><rect x="299" y="31" width="10" height="2" fill="#007a00"/><rect x="299" y="33" width="2" height="1" fill="#007a00"/><rect x="310" y="23" width="10" height="10" fill="#8583c7"/><rect x="321" y="23" width="10" height="5" fill="#ffff00"/><rect x="321" y="28" width="10" height="5" fill="#8583c7"/><rect x="332" y="23" width="10" height="10" fill="#8583c7"/><rect x="343" y="23" width="10" height="5" fill="#ffa95a"/><rect x="343" y="28" width="10" height="5" fill="#8583c7"/><rect x="354" y="23" width="10" height="1" fill="#ffa95a"/><rect x="354" y="24" width="7" height="1" fill="#ffa95a"/><rect x="361" y="24" width="3" height="1" fill="#0000fe"/><rect x="354" y="25" width="10" height="1" fill="#0000fe"/><rect x="354" y="26" width="4" height="1" fill="#0000fe"/><rect x="358" y="26" width="6" height="1" fill="#00ffff"/><rect x="354" y="27" width="10" height="1" fill="#00ffff"/><rect x="354" y="28" width="1" height="1" fill="#00ffff"/><rect x="355" y="28" width="9" height="1" fill="#8583c7"/><rect x="354" y="29" width="8" height="1" fill="#8583c7"/><rect x="362" y="29" width="2" height="1" fill="#ff007f"/><rect x="354" y="30" width="10" height="1" fill="#ff007f"/><rect x="354" y="31" width="5" height="1" fill="#ff007f"/><rect x="359" y="31" width="5" height="1" fill="#007a00"/><rect x="354" y="32" width="10" height="1" fill="#007a00"/><rect x="354" y="33" width="2" height="1" fill="#007a00"/><rect x="365" y="23" width="10" height="3" fill="#fe0000"/><rect x="365" y="26" width="4" height="1" fill="#fe0000"/><rect x="369" y="26" width="6" height="1" fill="#8583c7"/><rect x="365" y="27" width="10" height="2" fill="#8583c7"/><rect x="365" y="29" width="8" height="1" fill="#8583c7"/><rect x="373" y="29" width="2" height="1" fill="#007a00"/><rect x="365" y="30" width="10" height="3" fill="#007a00"/><rect x="365" y="33" width="2" height="1" fill="#007a00"/><rect x="376" y="23" width="10" height="5" fill="#8583c7"/><rect x="376" y="28" width="10" height="5" fill="#007a00"/><rect x="387" y="23" width="10" height="5" fill="#8583c7"/><rect x="387" y="28" width="10" height="5" fill="#007a00"/><rect x="398" y="23" width="10" height="5" fill="#8583c7"/><rect x="398" y="28" width="10" height="5" fill="#007a00"/><rect x="409" y="23" width="10" height="3" fill="#0000fe"/><rect x="409" y="26" width="4" height="1" fill="#0000fe"/><rect x="413" y="26" width="6" height="1" fill="#8583c7"/><rect x="409" y="27" width="10" height="2" fill="#8583c7"/><rect x="409" y="29" width="8" height="1" fill="#8583c7"/><rect x="417" y="29" width="2" height="1" fill="#007a00"/><rect x="409" y="30" width="10" height="3" fill="#007a00"/><rect x="409" y="33" width="2" height="1" fill="#007a00"/><rect x="420" y="23" width="10" height="10" fill="#8583c7"/><rect x="13" y="34" width="10" height="5" fill="#8583c7"/><rect x="13" y="39" width="10" height="5" fill="#007a00"/><rect x="79" y="34" width="10" height="3" fill="#ffff00"/><rect x="79" y="37" width="4" height="1" fill="#ffff00"/><rect x="83" y="37" width="6" height="1" fill="#8583c7"/><rect x="79" y="38" width="10" height="2" fill="#8583c7"/><rect x="79" y="40" width="8" height="1" fill="#8583c7"/><rect x="87" y="40" width="2" height="1" fill="#007a00"/><rect x="79" y="41" width="10" height="3" fill="#007a00"/><rect x="79" y="44" width="2" height="1" fill="#007a00"/><rect x="101" y="34" width="10" height="10" fill="#8583c7"/><rect x="189" y="34" width="10" height="10" fill="#8583c7"/><rect x="200" y="34" width="10" height="10" fill="#8583c7"/><rect x="255" y="34" width="10" height="10" fill="#8583c7"/><rect x="277" y="34" width="10" height="10" fill="#8583c7"/><rect x="288" y="34" width="10" height="5" fill="#8583c7"/><rect x="288" y="39" width="10" height="5" fill="#007a00"/><rect x="310" y="34" width="10" height="10" fill="#8583c7"/><rect x="321" y="34" width="10" height="3" fill="#8583c7"/><rect x="321" y="37" width="4" height="1" fill="#8583c7"/><rect x="325" y="37" width="6" height="1" fill="#ff007f"/><rect x="321" y="38" width="10" height="2" fill="#ff007f"/><rect x="321" y="40" width="8" height="1" fill="#ff007f"/><rect x="329" y="40" width="2" height="1" fill="#007a00"/><rect x="321" y="41" width="10" height="3" fill="#007a00"/><rect x="321" y="44" width="2" height="1" fill="#007a00"/><rect x="332" y="34" width="10" height="2" fill="#80ffc3"/><rect x="332" y="36" width="5" height="1" fill="#80ffc3"/><rect x="337" y="36" width="5" height="1" fill="#8583c7"/><rect x="332" y="37" width="10" height="2" fill="#8583c7"/><rect x="332" y="39" width="10" height="2" fill="#ff007f"/><rect x="332" y="41" width="5" height="1" fill="#ff007f"/><rect x="337" y="41" width="5" height="1" fill="#007a00"/><rect x="332" y="42" width="10" height="2" fill="#007a00"/><rect x="332" y="44" width="2" height="1" fill="#007a00"/><rect x="354" y="34" width="10" height="5" fill="#0000fe"/><rect x="354" y="39" width="10" height="5" fill="#8583c7"/><rect x="112" y="45" width="10" height="10" fill="#8583c7"/><rect x="123" y="45" width="10" height="5" fill="#8583c7"/><rect x="123" y="50" width="10" height="5" fill="#007a00"/><rect x="134" y="45" width="10" height="10" fill="#8583c7"/><rect x="145" y="45" width="10" height="5" fill="#0000fe"/><rect x="145" y="50" width="10" height="5" fill="#8583c7"/><rect x="156" y="45" width="10" height="5" fill="#8583c7"/><rect x="156" y="50" width="10" height="5" fill="#007a00"/><rect x="178" y="45" width="10" height="10" fill="#8583c7"/><rect x="189" y="45" width="10" height="3" fill="#0000fe"/><rect x="189" y="48" width="4" height="1" fill="#0000fe"/><rect x="193" y="48" width="6" height="1" fill="#8583c7"/><rect x="189" y="49" width="10" height="2" fill="#8583c7"/><rect x="189" y="51" width="8" height="1" fill="#8583c7"/><rect x="197" y="51" width="2" height="1" fill="#007a00"/><rect x="189" y="52" width="10" height="3" fill="#007a00"/><rect x="189" y="55" width="2" height="1" fill="#007a00"/><rect x="200" y="45" width="10" height="10" fill="#8583c7"/><rect x="211" y="45" width="10" height="10" fill="#8583c7"/><rect x="277" y="45" width="10" height="10" fill="#8583c7"/><rect x="365" y="45" width="10" height="10" fill="#8583c7"/><rect x="376" y="45" width="10" height="10" fill="#8583c7"/><rect x="398" y="45" width="10" height="10" fill="#8583c7"/><rect x="409" y="45" width="10" height="5" fill="#8583c7"/><rect x="409" y="50" width="10" height="5" fill="#007a00"/><rect x="420" y="45" width="10" height="2" fill="#ffa95a"/><rect x="420" y="47" width="5" height="1" fill="#ffa95a"/><rect x="425" y="47" width="5" height="1" fill="#0000fe"/><rect x="420" y="48" width="10" height="2" fill="#0000fe"/><rect x="420" y="50" width="10" height="2" fill="#00ffff"/><rect x="420" y="52" width="5" height="1" fill="#00ffff"/><rect x="425" y="52" width="5" height="1" fill="#8583c7"/><rect x="420" y="53" width="10" height="2" fill="#8583c7"/><rect x="420" y="55" width="2" height="1" fill="#8583c7"/><rect x="13" y="56" width="10" height="10" fill="#8583c7"/><rect x="24" y="56" width="10" height="10" fill="#8583c7"/><rect x="35" y="56" width="10" height="10" fill="#8583c7"/><rect x="46" y="56" width="10" height="3" fill="#0000fe"/><rect x="46" y="59" width="4" height="1" fill="#0000fe"/><rect x="50" y="59" width="6" height="1" fill="#8583c7"/><rect x="46" y="60" width="10" height="2" fill="#8583c7"/><rect x="46" y="62" width="8" height="1" fill="#8583c7"/><rect x="54" y="62" width="2" height="1" fill="#ff007f"/><rect x="46" y="63" width="10" height="3" fill="#ff007f"/><rect x="46" y="66" width="2" height="1" fill="#ff007f"/><rect x="57" y="56" width="10" height="5" fill="#8583c7"/><rect x="57" y="61" width="10" height="5" fill="#ff007f"/><rect x="68" y="56" width="10" height="10" fill="#8583c7"/><rect x="90" y="56" width="10" height="3" fill="#fe0000"/><rect x="90" y="59" width="4" height="1" fill="#fe0000"/><rect x="94" y="59" width="6" height="1" fill="#8583c7"/><rect x="90" y="60" width="10" height="2" fill="#8583c7"/><rect x="90" y="62" width="8" height="1" fill="#8583c7"/><rect x="98" y="62" width="2" height="1" fill="#007a00"/><rect x="90" y="63" width="10" height="3" fill="#007a00"/><rect x="90" y="66" width="2" height="1" fill="#007a00"/><rect x="101" y="56" width="10" height="5" fill="#fe0000"/><rect x="101" y="61" width="10" height="5" fill="#8583c7"/><rect x="123" y="56" width="10" height="5" fill="#8583c7"/><rect x="123" y="61" width="10" height="5" fill="#007a00"/></svg>
<div class="a" style="left:496px;top:292px;width:10px;height:10px;background:#c0c0c0;"></div>
<div class="t ss" style="left:512px;top:289px;"><span class="c">未使用</span></div>
<div class="a" style="left:496px;top:307px;width:10px;height:10px;background:#ff0000;"></div>
<div class="t ss" style="left:512px;top:304px;"><span class="l" style="margin-right:-9.600px">NTFS MFT</span><span class="c">范围</span></div>
<div class="t ss" style="left:635px;top:304px;"><span class="l" style="margin-right:-2.400px">27</span></div>
<div class="a" style="left:496px;top:322px;width:10px;height:10px;background:#00ff00;"></div>
<div class="t ss" style="left:512px;top:319px;"><span class="l" style="margin-right:-4.800px">NTFS</span><span class="c">启动扇区</span></div>
<div class="t ss" style="left:635px;top:319px;"><span class="l" style="margin-right:-1.200px">1</span></div>
<div class="a" style="left:496px;top:337px;width:10px;height:10px;background:#8080c0;"></div>
<div class="t ss" style="left:512px;top:334px;"><span class="l" style="margin-right:-14.400px">NTFS LogFile</span></div>
<div class="t ss" style="left:635px;top:334px;"><span class="l" style="margin-right:-1.200px">1</span></div>
<div class="a" style="left:496px;top:352px;width:10px;height:10px;background:#ff80f4;"></div>
<div class="t ss" style="left:512px;top:349px;"><span class="l" style="margin-right:-16.800px">ReFS MetaBlock</span></div>
<div class="t ss" style="left:635px;top:349px;"><span class="l" style="margin-right:-1.200px"><span class="z">0</span></span></div>
<div class="a" style="left:496px;top:367px;width:10px;height:10px;background:#ffff00;"></div>
<div class="t ss" style="left:512px;top:364px;"><span class="l" style="margin-right:-3.600px">FAT</span><span class="c">目录条目</span></div>
<div class="t ss" style="left:635px;top:364px;"><span class="l" style="margin-right:-2.400px">77</span></div>
<div class="a" style="left:496px;top:382px;width:10px;height:10px;background:#00ffff;"></div>
<div class="t ss" style="left:512px;top:379px;"><span class="l" style="margin-right:-16.800px">Ext2/Ext3/Ext4</span><span class="c">超级块</span></div>
<div class="t ss" style="left:635px;top:379px;"><span class="l" style="margin-right:-4.800px">1981</span></div>
<div class="a" style="left:496px;top:397px;width:10px;height:10px;background:#0080ff;"></div>
<div class="t ss" style="left:512px;top:394px;"><span class="l" style="margin-right:-8.400px">UFS/FFS</span><span class="c">超级块</span></div>
<div class="t ss" style="left:635px;top:394px;"><span class="l" style="margin-right:-1.200px"><span class="z">0</span></span></div>
<div class="a" style="left:496px;top:412px;width:10px;height:10px;background:#c4c0ff;"></div>
<div class="t ss" style="left:512px;top:409px;"><span class="l" style="margin-right:-8.400px">UFS/FFS</span><span class="c">目录条目</span></div>
<div class="t ss" style="left:635px;top:409px;"><span class="l" style="margin-right:-1.200px"><span class="z">0</span></span></div>
<div class="a" style="left:496px;top:427px;width:10px;height:10px;background:#ff0080;"></div>
<div class="t ss" style="left:512px;top:424px;"><span class="l" style="margin-right:-19.200px">HFS/HFS+ BTree+ </span><span class="c">范围</span></div>
<div class="t ss" style="left:635px;top:424px;"><span class="l" style="margin-right:-2.400px">7<span class="z">0</span></span></div>
<div class="a" style="left:496px;top:442px;width:10px;height:10px;background:#80ff9c;"></div>
<div class="t ss" style="left:512px;top:439px;"><span class="l" style="margin-right:-19.200px">APFS VolumeBlock</span></div>
<div class="t ss" style="left:635px;top:439px;"><span class="l" style="margin-right:-1.200px"><span class="z">0</span></span></div>
<div class="a" style="left:496px;top:457px;width:10px;height:10px;background:#80ffff;"></div>
<div class="t ss" style="left:512px;top:454px;"><span class="l" style="margin-right:-18.000px">APFS BitmapRoot</span></div>
<div class="t ss" style="left:635px;top:454px;"><span class="l" style="margin-right:-1.200px">1</span></div>
<div class="a" style="left:496px;top:472px;width:10px;height:10px;background:#606060;"></div>
<div class="t ss" style="left:512px;top:469px;"><span class="l" style="margin-right:-8.400px">ISO966<span class="z">0</span></span><span class="c">目录条目</span></div>
<div class="t ss" style="left:635px;top:469px;"><span class="l" style="margin-right:-1.200px"><span class="z">0</span></span></div>
<div class="a" style="left:704px;top:292px;width:10px;height:10px;background:#70a8aa;"></div>
<div class="t ss" style="left:720px;top:289px;"><span class="c">未识别</span></div>
<div class="a" style="left:704px;top:307px;width:10px;height:10px;background:#007a00;"></div>
<div class="t ss" style="left:720px;top:304px;"><span class="l" style="margin-right:-4.800px">NTFS</span><span class="c">目录条目</span></div>
<div class="t ss" style="left:866px;top:304px;"><span class="l" style="margin-right:-4.800px">9648</span></div>
<div class="a" style="left:704px;top:322px;width:10px;height:10px;background:#00b000;"></div>
<div class="t ss" style="left:720px;top:319px;"><span class="l" style="margin-right:-4.800px">NTFS</span><span class="c">恢复点</span></div>
<div class="t ss" style="left:866px;top:319px;"><span class="l" style="margin-right:-1.200px"><span class="z">0</span></span></div>
<div class="a" style="left:704px;top:337px;width:10px;height:10px;background:#ff6060;"></div>
<div class="t ss" style="left:720px;top:334px;"><span class="l" style="margin-right:-18.000px">ReFS BootRecord</span></div>
<div class="t ss" style="left:866px;top:334px;"><span class="l" style="margin-right:-1.200px"><span class="z">0</span></span></div>
<div class="a" style="left:704px;top:352px;width:10px;height:10px;background:#0000ff;"></div>
<div class="t ss" style="left:720px;top:349px;"><span class="l" style="margin-right:-4.800px">FAT </span><span class="c">表格项</span></div>
<div class="t ss" style="left:866px;top:349px;"><span class="l" style="margin-right:-4.800px">1225</span></div>
<div class="a" style="left:704px;top:367px;width:10px;height:10px;background:#008080;"></div>
<div class="t ss" style="left:720px;top:364px;"><span class="l" style="margin-right:-3.600px">FAT</span><span class="c">启动扇区</span></div>
<div class="t ss" style="left:866px;top:364px;"><span class="l" style="margin-right:-1.200px"><span class="z">0</span></span></div>
<div class="a" style="left:704px;top:382px;width:10px;height:10px;background:#ffa95a;"></div>
<div class="t ss" style="left:720px;top:379px;"><span class="l" style="margin-right:-16.800px">Ext2/Ext3/Ext4</span><span class="c">目录条目</span></div>
<div class="t ss" style="left:866px;top:379px;"><span class="l" style="margin-right:-4.800px">43<span class="z">0</span>5</span></div>
<div class="a" style="left:704px;top:397px;width:10px;height:10px;background:#800000;"></div>
<div class="t ss" style="left:720px;top:394px;"><span class="l" style="margin-right:-9.600px">UFS/FFS </span><span class="c">柱面组</span></div>
<div class="t ss" style="left:866px;top:394px;"><span class="l" style="margin-right:-1.200px"><span class="z">0</span></span></div>
<div class="a" style="left:704px;top:412px;width:10px;height:10px;background:#808000;"></div>
<div class="t ss" style="left:720px;top:409px;"><span class="l" style="margin-right:-25.200px">HFS/HFS+ VolumeHeader</span></div>
<div class="t ss" style="left:866px;top:409px;"><span class="l" style="margin-right:-1.200px">2</span></div>
<div class="a" style="left:704px;top:427px;width:10px;height:10px;background:#80ff80;"></div>
<div class="t ss" style="left:720px;top:424px;"><span class="l" style="margin-right:-4.800px">APFS</span><span class="c">超级块</span></div>
<div class="t ss" style="left:866px;top:424px;"><span class="l" style="margin-right:-1.200px"><span class="z">0</span></span></div>
<div class="a" style="left:704px;top:442px;width:10px;height:10px;background:#80ffc3;"></div>
<div class="t ss" style="left:720px;top:439px;"><span class="l" style="margin-right:-4.800px">APFS</span><span class="c">个节点</span></div>
<div class="t ss" style="left:866px;top:439px;"><span class="l" style="margin-right:-1.200px">5</span></div>
<div class="a" style="left:704px;top:457px;width:10px;height:10px;background:#303030;"></div>
<div class="t ss" style="left:720px;top:454px;"><span class="l" style="margin-right:-28.800px">ISO966<span class="z">0</span> VolumeDescriptor</span></div>
<div class="t ss" style="left:866px;top:454px;"><span class="l" style="margin-right:-1.200px"><span class="z">0</span></span></div>
<div class="a" style="left:704px;top:472px;width:10px;height:10px;background:#8583c7;"></div>
<div class="t ss" style="left:720px;top:469px;"><span class="c">特定档案文件</span></div>
<div class="t ss" style="left:866px;top:469px;"><span class="l" style="margin-right:-7.200px">5<span class="z">0</span>9<span class="z">0</span>21</span></div>
<div class="a" style="left:486px;top:493px;width:65px;height:22px;background:#f0f0f0;border:1px solid #dedede;border-top:none"></div>
<div class="a" style="left:550px;top:493px;width:93px;height:25px;background:#fff;border:1px solid #e4e4e4;border-top:none"></div>
<svg class="a" style="left:495px;top:495px" width="20" height="20" viewBox="0 0 20 20">
<defs><linearGradient id="dv495" x1="0" y1="0" x2="0" y2="1"><stop offset="0" stop-color="#d2d2d2"/><stop offset="1" stop-color="#e6e6e6"/></linearGradient></defs>
<rect x="5.300" y="5.200" width="11.600" height="11.600" rx="1" fill="url(#dv495)" stroke="#b4b4b4" stroke-width="0.700"/>
<rect x="5.600" y="13.700" width="11" height="2.900" fill="#ececec" stroke="#a9a9a9" stroke-width="0.600"/><rect x="12.900" y="14.300" width="2.300" height="1" fill="#35c835"/>
<circle cx="6.900" cy="6.800" r="5.600" fill="#e6f2fc" stroke="#a5c8ea" stroke-width="0.900"/>
<rect x="5.850" y="5.500" width="2.200" height="5.400" fill="#2878a8"/><rect x="5.850" y="2.900" width="2.200" height="1.600" fill="#2878a8"/>
</svg>
<div class="t ss" style="left:516px;top:497px;"><span class="c">属性</span></div>
<svg class="a" style="left:563px;top:497px" width="18" height="16" viewBox="0 0 18 16">
<path d="M1.500 1.500 H15.500 V10.500 H12.500 L11 14 L8.500 10.500 H1.500 Z" fill="#f7fbff" stroke="#5b9bd5" stroke-width="1.200" stroke-linejoin="round"/>
<path d="M3.500 4.500 H6 M7 4.500 H9.500 M10.500 4.500 H13" stroke="#2e75c8" stroke-width="1.200" stroke-dasharray="1.200 0.600"/>
<path d="M3.500 6.700 H6 M7 6.700 H9.500" stroke="#d03030" stroke-width="1.200" stroke-dasharray="1.200 0.600"/><path d="M10.500 6.700 H13" stroke="#2e75c8" stroke-width="1.200" stroke-dasharray="1.200 0.600"/>
<path d="M3.500 8.800 H6 M7 8.800 H9.500 M10.500 8.800 H13" stroke="#2e75c8" stroke-width="1" stroke-dasharray="1.200 0.600"/>
</svg>
<div class="t ss" style="left:584px;top:497px;"><span class="c">扫描信息</span></div>
<div class="a" style="left:1px;top:523px;width:960px;height:22px;background:#c4c4c4;border-top:2px solid #9a9a9a;border-bottom:1px solid #a8a8a8"></div>
<div class="a" style="left:959px;top:523px;width:2px;height:22px;background:#909090;"></div>
<div class="a" style="left:1px;top:523px;width:2px;height:22px;background:#909090;"></div>
<div class="t " style="left:7px;top:527px;">日志</div>
<svg class="a" style="left:943px;top:527px" width="12" height="12" viewBox="0 0 12 12"><path d="M2.200 3 L9.800 10 M9.800 3 L2.200 10" stroke="#000" stroke-width="1.900"/></svg>
<div class="a" style="left:1px;top:545px;width:960px;height:114px;background:#fff;border:2px solid #909090;border-top:none;border-bottom-width:3px"></div>
<div class="a" style="left:102px;top:546px;width:1px;height:56px;background:#e6e6e6;"></div>
<div class="a" style="left:202px;top:546px;width:1px;height:56px;background:#e6e6e6;"></div>
<div class="a" style="left:302px;top:546px;width:1px;height:56px;background:#e6e6e6;"></div>
<div class="a" style="left:3px;top:601px;width:956px;height:1px;background:#e2e2e2;"></div>
<div class="a" style="left:3px;top:570px;width:956px;height:16px;background:#d9d9d9;"></div>
<div class="t" style="left:53px;top:550px;width:100px;margin-left:-50px;text-align:center">类型</div>
<div class="t" style="left:153px;top:550px;width:100px;margin-left:-50px;text-align:center">日期</div>
<div class="t" style="left:253px;top:550px;width:100px;margin-left:-50px;text-align:center">时间</div>
<div class="t" style="left:631px;top:550px;width:100px;margin-left:-50px;text-align:center">文本</div>
<svg class="a" style="left:6px;top:569.7px" width="17" height="16" viewBox="0 0 17 16"><defs><linearGradient id="ib" x1="0" y1="0" x2="0" y2="1"><stop offset="0" stop-color="#eaf5ff"/><stop offset="1" stop-color="#a9d0f6"/></linearGradient></defs>
<path d="M8.500 0.600 C12.800 0.600 15.600 3.200 15.600 6.300 C15.600 8.400 14.200 10.200 12 11.200 L11.600 15 L7.600 12 C3.500 11.800 1.200 9.200 1.200 6.300 C1.200 3.200 4.200 0.600 8.500 0.600 Z" fill="url(#ib)" stroke="#8587c6" stroke-width="0.900"/>
<rect x="7.600" y="4.600" width="1.900" height="4.800" fill="#1874d0"/><rect x="7.600" y="2" width="1.900" height="1.700" fill="#1874d0"/></svg>
<div class="t " style="left:27.5px;top:570px;letter-spacing:0.250px;">系统</div>
<div class="t " style="left:106px;top:570px;letter-spacing:0.569px;">2020/12/7</div>
<div class="t " style="left:206px;top:570px;letter-spacing:0.066px;">9:56:37</div>
<div class="t " style="left:306px;top:570px;letter-spacing:0.244px;">8m 12s 的 D: 扫描已完成</div>
<svg class="a" style="left:6px;top:585.7px" width="17" height="16" viewBox="0 0 17 16"><defs><linearGradient id="ib" x1="0" y1="0" x2="0" y2="1"><stop offset="0" stop-color="#eaf5ff"/><stop offset="1" stop-color="#a9d0f6"/></linearGradient></defs>
<path d="M8.500 0.600 C12.800 0.600 15.600 3.200 15.600 6.300 C15.600 8.400 14.200 10.200 12 11.200 L11.600 15 L7.600 12 C3.500 11.800 1.200 9.200 1.200 6.300 C1.200 3.200 4.200 0.600 8.500 0.600 Z" fill="url(#ib)" stroke="#8587c6" stroke-width="0.900"/>
<rect x="7.600" y="4.600" width="1.900" height="4.800" fill="#1874d0"/><rect x="7.600" y="2" width="1.900" height="1.700" fill="#1874d0"/></svg>
<div class="t " style="left:27.5px;top:586px;letter-spacing:0.250px;">系统</div>
<div class="t " style="left:106px;top:586px;letter-spacing:0.569px;">2020/12/7</div>
<div class="t " style="left:206px;top:586px;letter-spacing:0.066px;">9:58:19</div>
<div class="t " style="left:306px;top:586px;letter-spacing:0.033px;">文件枚举在9秒内完成</div>
<div class="t " style="left:97.5px;top:545.7px;font-size:19px;line-height:20px;height:20px;color:#3d7fd6;letter-spacing:-0.541px;">codenetwork.cn</div>
<div class="t " style="left:4px;top:663px;">准备</div>
<div class="a" style="left:942px;top:661px;width:1px;height:18px;background:#d4d4d4;"></div>
<svg class="a" style="left:949px;top:670px" width="10" height="10" viewBox="0 0 10 10"><g fill="#a9a9a9"><rect x="7" y="1" width="2" height="2"/><rect x="4" y="4" width="2" height="2"/><rect x="7" y="4" width="2" height="2"/><rect x="1" y="7" width="2" height="2"/><rect x="4" y="7" width="2" height="2"/><rect x="7" y="7" width="2" height="2"/></g></svg>
</body></html>
